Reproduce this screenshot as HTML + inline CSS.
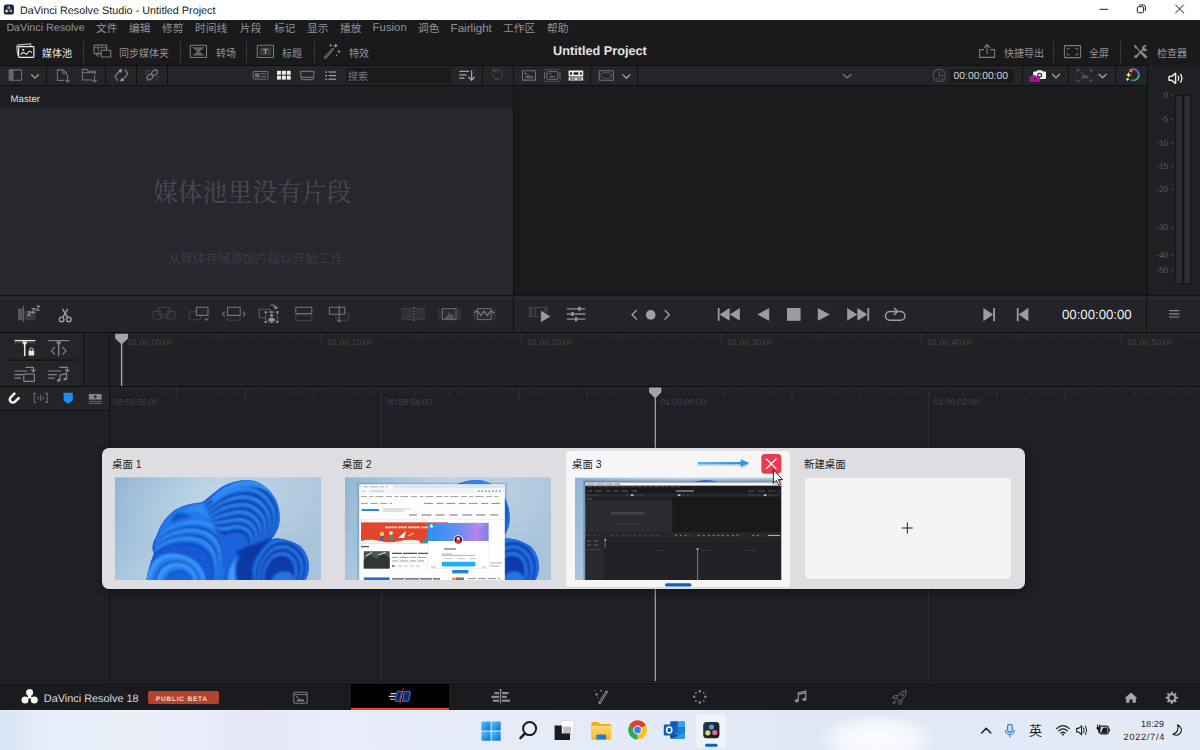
<!DOCTYPE html>
<html lang="zh-CN"><head><meta charset="utf-8"><title>DaVinci Resolve Studio - Untitled Project</title>
<style>
html,body{margin:0;padding:0;background:#28282e;}
body{width:1200px;height:750px;overflow:hidden;position:relative;font-family:"Liberation Sans",sans-serif;}
#root{position:absolute;left:0;top:0;width:1200px;height:750px;overflow:hidden;}
#root div,#root .t,#root svg{position:absolute;}
.t{white-space:nowrap;display:block;text-rendering:geometricPrecision;font-kerning:normal;}
svg.g{overflow:visible;}
svg.g text{font-family:"Liberation Sans","Noto Sans CJK SC",sans-serif;white-space:pre;}
svg.layer{left:0;top:0;pointer-events:none;}
</style></head>
<body><div id="root">
<div style="left:0px;top:0px;width:1200px;height:20px;background:#ffffff;"></div>
<span class="t" style="left:20px;top:5.9px;font-size:10.8px;line-height:10.8px;color:#1a1a1a;">DaVinci Resolve Studio - Untitled Project</span>
<div style="left:0px;top:20px;width:1200px;height:691px;background:#27282d;"></div>
<div style="left:0px;top:20px;width:1200px;height:17px;background:#1a1a1d;"></div>
<div style="left:0px;top:37px;width:1200px;height:28px;background:#1a1a1d;"></div>
<div style="left:0px;top:65px;width:1200px;height:1px;background:#0f0f11;"></div>
<div style="left:0px;top:66px;width:1200px;height:19px;background:#242529;"></div>
<div style="left:0px;top:85px;width:1200px;height:1px;background:#0f0f11;"></div>
<div style="left:0px;top:86px;width:513px;height:23.6px;background:#1e1f23;"></div>
<div style="left:0px;top:109px;width:513px;height:186px;background:#27282d;"></div>
<div style="left:513px;top:65px;width:1px;height:231px;background:#0f0f11;"></div>
<div style="left:514px;top:86px;width:634px;height:209px;background:#1b1b1c;"></div>
<div style="left:1147px;top:65px;width:1px;height:231px;background:#0f0f11;"></div>
<div style="left:1148px;top:65px;width:52px;height:230px;background:#1f2023;"></div>
<div style="left:0px;top:294.6px;width:1200px;height:1.8px;background:#121214;"></div>
<div style="left:0px;top:296.4px;width:1200px;height:3.6px;background:#26272c;"></div>
<div style="left:0px;top:300px;width:1200px;height:1px;background:#1d1d21;"></div>
<div style="left:0px;top:301px;width:1200px;height:31px;background:#232428;"></div>
<div style="left:0px;top:332px;width:1200px;height:1px;background:#0f0f11;"></div>
<div style="left:0px;top:333px;width:1200px;height:53px;background:#202125;"></div>
<div style="left:0px;top:386px;width:1200px;height:1px;background:#0f0f11;"></div>
<div style="left:0px;top:387px;width:1200px;height:298px;background:#1f2025;"></div>
<div style="left:0px;top:387px;width:109px;height:24px;background:#232428;"></div>
<div style="left:0px;top:410px;width:109px;height:1px;background:#0f0f11;"></div>
<div style="left:0px;top:411px;width:109px;height:273px;background:#1f2126;"></div>
<div style="left:109px;top:333px;width:1px;height:352px;background:#0f0f11;"></div>
<div style="left:513px;top:297px;width:1px;height:35px;background:#0f0f11;"></div>
<div style="left:1146px;top:297px;width:1px;height:35px;background:#0f0f11;"></div>
<div style="left:0px;top:333px;width:83px;height:53px;background:#242529;"></div>
<div style="left:83px;top:333px;width:1px;height:53px;background:#0f0f11;"></div>
<span class="t" style="left:6.4px;top:23.2px;font-size:10.7px;line-height:10.7px;color:#939398;">DaVinci Resolve</span>
<svg class="g" style="left:95.6px;top:31.9px" width="1" height="1"><text x="0" y="0" font-size="10.7" fill="#939398">文件</text></svg>
<svg class="g" style="left:128.6px;top:31.9px" width="1" height="1"><text x="0" y="0" font-size="10.7" fill="#939398">编辑</text></svg>
<svg class="g" style="left:162.0px;top:31.9px" width="1" height="1"><text x="0" y="0" font-size="10.7" fill="#939398">修剪</text></svg>
<svg class="g" style="left:195.2px;top:31.9px" width="1" height="1"><text x="0" y="0" font-size="10.7" fill="#939398">时间线</text></svg>
<svg class="g" style="left:240.0px;top:31.9px" width="1" height="1"><text x="0" y="0" font-size="10.7" fill="#939398">片段</text></svg>
<svg class="g" style="left:273.6px;top:31.9px" width="1" height="1"><text x="0" y="0" font-size="10.7" fill="#939398">标记</text></svg>
<svg class="g" style="left:306.6px;top:31.9px" width="1" height="1"><text x="0" y="0" font-size="10.7" fill="#939398">显示</text></svg>
<svg class="g" style="left:339.6px;top:31.9px" width="1" height="1"><text x="0" y="0" font-size="10.7" fill="#939398">播放</text></svg>
<svg class="g" style="left:417.6px;top:31.9px" width="1" height="1"><text x="0" y="0" font-size="10.7" fill="#939398">调色</text></svg>
<svg class="g" style="left:503.1px;top:31.9px" width="1" height="1"><text x="0" y="0" font-size="10.7" fill="#939398">工作区</text></svg>
<svg class="g" style="left:546.6px;top:31.9px" width="1" height="1"><text x="0" y="0" font-size="10.7" fill="#939398">帮助</text></svg>
<span class="t" style="left:372.6px;top:22.9px;font-size:11.4px;line-height:11.4px;color:#939398;">Fusion</span>
<span class="t" style="left:450.6px;top:22.8px;font-size:11.6px;line-height:11.6px;color:#939398;">Fairlight</span>
<svg class="g" style="left:42px;top:56.7px" width="1" height="1"><text x="0" y="0" font-size="10" fill="#e6e6e6">媒体池</text></svg>
<svg class="g" style="left:119px;top:56.7px" width="1" height="1"><text x="0" y="0" font-size="10" fill="#939398">同步媒体夹</text></svg>
<svg class="g" style="left:216px;top:56.7px" width="1" height="1"><text x="0" y="0" font-size="10" fill="#939398">转场</text></svg>
<svg class="g" style="left:282.4px;top:56.7px" width="1" height="1"><text x="0" y="0" font-size="10" fill="#939398">标题</text></svg>
<svg class="g" style="left:349px;top:56.7px" width="1" height="1"><text x="0" y="0" font-size="10" fill="#939398">特效</text></svg>
<svg class="g" style="left:1004px;top:56.7px" width="1" height="1"><text x="0" y="0" font-size="10" fill="#939398">快捷导出</text></svg>
<svg class="g" style="left:1089px;top:56.7px" width="1" height="1"><text x="0" y="0" font-size="10" fill="#939398">全屏</text></svg>
<svg class="g" style="left:1157px;top:56.7px" width="1" height="1"><text x="0" y="0" font-size="10" fill="#939398">检查器</text></svg>
<div style="left:83px;top:41px;width:1px;height:22px;background:#37373c;"></div>
<div style="left:180px;top:41px;width:1px;height:22px;background:#37373c;"></div>
<div style="left:246px;top:41px;width:1px;height:22px;background:#37373c;"></div>
<div style="left:314px;top:41px;width:1px;height:22px;background:#37373c;"></div>
<div style="left:1053px;top:41px;width:1px;height:22px;background:#37373c;"></div>
<div style="left:1120px;top:41px;width:1px;height:22px;background:#37373c;"></div>
<span class="t" style="left:553px;top:44.9px;font-size:12.7px;line-height:12.7px;color:#e4e4e4;font-weight:bold;">Untitled Project</span>
<div style="left:46px;top:65px;width:1px;height:21px;background:#0f0f11;"></div>
<div style="left:105px;top:65px;width:1px;height:21px;background:#0f0f11;"></div>
<div style="left:136px;top:65px;width:1px;height:21px;background:#0f0f11;"></div>
<div style="left:167px;top:65px;width:1px;height:21px;background:#0f0f11;"></div>
<div style="left:482px;top:65px;width:1px;height:21px;background:#0f0f11;"></div>
<div style="left:590px;top:65px;width:1px;height:21px;background:#0f0f11;"></div>
<div style="left:637px;top:65px;width:1px;height:21px;background:#0f0f11;"></div>
<div style="left:1021.5px;top:65px;width:1px;height:21px;background:#0f0f11;"></div>
<div style="left:1068px;top:65px;width:1px;height:21px;background:#0f0f11;"></div>
<div style="left:1114.5px;top:65px;width:1px;height:21px;background:#0f0f11;"></div>
<div style="left:346px;top:68px;width:105px;height:15.4px;background:#1b1b1e;border-radius:2px;"></div>
<div style="left:950.4px;top:69.4px;width:63.2px;height:13.6px;background:#1a1a1d;border-radius:1.5px;"></div>
<svg class="g" style="left:348px;top:80.2px" width="1" height="1"><text x="0" y="0" font-size="10" fill="#77777d">搜索</text></svg>
<span class="t" style="left:10.6px;top:95.3px;font-size:9.6px;line-height:9.6px;color:#e0e0e0;">Master</span>
<svg class="g" style="left:153px;top:201px" width="1" height="1"><text x="0" y="0" font-size="24.8" fill="#4a4a50" style="font-family:'Liberation Serif','Noto Serif CJK SC',serif;">媒体池里没有片段</text></svg>
<svg class="g" style="left:168px;top:263px" width="1" height="1"><text x="0" y="0" font-size="12.5" fill="#45454b" font-weight="300">从媒体存储添加片段以开始工作</text></svg>
<span class="t" style="left:953.6px;top:72.3px;font-size:10.3px;line-height:10.3px;color:#d8d8d8;">00:00:00:00</span>
<span class="t" style="left:1062px;top:308px;font-size:13.2px;line-height:13.2px;color:#f0f0f0;">00:00:00:00</span>
<svg class="layer" width="1200" height="750" viewBox="0 0 1200 750" style=""><defs><linearGradient id="appbg" x1="0" y1="0" x2="1" y2="1"><stop offset="0" stop-color="#1c2b3d"/><stop offset="1" stop-color="#15151c"/></linearGradient></defs><rect x="3.8" y="4.4" width="10.1" height="10" rx="2.2" fill="url(#appbg)"/><circle cx="8.9" cy="7.7" r="1.6" fill="#5a9ee0"/><circle cx="6.7" cy="11" r="1.6" fill="#d0da80"/><circle cx="10.9" cy="10.9" r="1.6" fill="#d9789c"/><g stroke="#1b1b1b" stroke-width="1" fill="none"><path d="M1099.5 9.3H1108"/><rect x="1137.3" y="6.7" width="6.3" height="6" rx="1.2"/><path d="M1139.2 5H1143.3Q1145.4 5 1145.4 7.1V10.8"/><path d="M1175.3 4.6L1183.9 13.2M1183.9 4.6L1175.3 13.2"/></g><g fill="none" stroke="#ececec" stroke-width="1.2" stroke-linejoin="round"><path d="M18.2 46.2L16.6 46.5L17.9 55.6" stroke-opacity=".75"/><path d="M17 45.2L30.5 43.9L30.8 46.3" stroke-opacity=".75"/><rect x="18.6" y="46.6" width="15.3" height="10.8" rx=".8"/><path d="M20.6 54.6Q23 51.2 25 53.4T28.6 51.6Q30.4 50.6 32 53" stroke-width="1.1"/></g><rect x="22.3" y="48.9" width="1.9" height="1.8" fill="#ececec"/><g fill="none" stroke="#7b7b81" stroke-width="1.1"><rect x="94" y="45" width="12.6" height="8.6" rx=".6"/><path d="M94 47.6H106.6M98.3 45V53.6M102.4 45V47.6" stroke-opacity=".7"/><rect x="101.2" y="50.2" width="9.6" height="6.8" rx=".6" fill="#1b1b1e"/><path d="M96.8 53.6V56M96.8 56H99" stroke-opacity=".8"/></g><rect x="190.3" y="45.3" width="16.2" height="12.2" rx=".6" fill="none" stroke="#7b7b81" stroke-width="1.1"/><path d="M192.3 47.2H204.5L199.6 51.4L204.5 55.6H192.3L197.2 51.4Z" fill="#7b7b81" fill-opacity=".75"/><rect x="257.3" y="45.3" width="16.2" height="12.2" rx=".6" fill="none" stroke="#7b7b81" stroke-width="1.1"/><rect x="259.4" y="47.4" width="12" height="8" fill="#7b7b81" fill-opacity=".35"/><path d="M262.8 49.2H268M265.4 49.2V54" stroke="#a2a2a8" stroke-width="1.1" fill="none"/><g stroke="#7b7b81" fill="none" stroke-linecap="round"><path d="M325.2 57.6L332.8 49.2" stroke-width="2.4"/><path d="M325.2 57.6L332.8 49.2" stroke="#1b1b1e" stroke-width=".8"/></g><g fill="#a2a2a8"><path d="M335.8 43.2l.7 1.7 1.7.7-1.7.7-.7 1.7-.7-1.7-1.7-.7 1.7-.7z"/><path d="M339 49.6l.6 1.3 1.3.6-1.3.6-.6 1.3-.6-1.3-1.3-.6 1.3-.6z"/><path d="M330.6 43.8l.5 1 1 .5-1 .5-.5 1-.5-1-1-.5 1-.5z"/><circle cx="336.6" cy="55.2" r=".7"/><circle cx="333.2" cy="46.4" r=".5"/></g><g fill="none" stroke="#7b7b81" stroke-width="1.1" stroke-linejoin="round"><path d="M984 49.6H979.6V57.4H994.6V49.6H990.2"/><path d="M987.1 54V45M983.9 47.9L987.1 44.7L990.3 47.9"/></g><rect x="1064.4" y="45.6" width="16.2" height="12" rx=".6" fill="none" stroke="#7b7b81" stroke-width="1.1"/><path d="M1067.2 50.6V48.4H1070M1075 48.4H1077.8V50.6M1077.8 52.6V54.8H1075M1070 54.8H1067.2V52.6" fill="none" stroke="#7b7b81" stroke-width="1" stroke-opacity=".85"/><g stroke="#8b8b91" fill="none" stroke-linecap="round"><path d="M1135.2 46.4L1141.4 52.6" stroke-width="1.2"/><path d="M1142 53.2L1145.8 57" stroke-width="2.6"/><path d="M1136 56.6L1143.2 49.4" stroke-width="1.5"/></g><path d="M1146.8 45.6a3 3 0 1 0 1 4l-2.4 -.4 -1 -1.8z" fill="#8b8b91"/><path d="M1133.8 45l2.4 .6 .6 1.6 -1.4 1.2z" fill="#8b8b91"/><circle cx="1135.8" cy="56.6" r="1.5" fill="#8b8b91"/><rect x="9.2" y="69.9" width="12.4" height="10.4" rx=".5" fill="none" stroke="#707076" stroke-width="1.1"/><rect x="9.2" y="69.9" width="4.4" height="10.4" fill="#707076" fill-opacity=".85"/><path d="M31.6 74.7L35 78.10000000000001L38.4 74.7" fill="none" stroke="#a2a2a8" stroke-width="1.3" stroke-linecap="round" stroke-linejoin="round"/><g fill="none" stroke="#707076" stroke-width="1.1" stroke-linejoin="round"><path d="M66.4 75V73L63 69.9H57.4V80.4H64"/><path d="M62.8 70V73.2H66.3"/><path d="M67.6 74.6V82M65.4 79.8L67.6 82L69.8 79.8"/><path d="M92 80H82.4V69.4H86.6L88 71.2H95.4V74.4"/><path d="M82.4 72.6H95"/><path d="M94.6 75.4V82M92.4 79.8L94.6 82L96.8 79.8"/></g><g fill="none" stroke="#707076" stroke-width="1.5" stroke-linecap="round" stroke-linejoin="round"><path d="M120 71L116.6 74.4Q114.6 76.4 116 78.4L117.4 80.2"/><path d="M122.4 79.8L126.2 76Q128.2 74 126.8 72L125.2 70"/></g><path d="M118.2 70.2L122.2 69L121 73Z" fill="#a2a2a8"/><path d="M124.2 80.6L120.2 81.8L121.4 77.8Z" fill="#a2a2a8"/><g fill="none" stroke="#707076" stroke-width="1.3"><ellipse rx="3.3" ry="2.3" transform="translate(150 77) rotate(-42)" stroke-width="1.4"/><ellipse rx="3.3" ry="2.3" transform="translate(154.6 72.8) rotate(-42)" stroke-width="1.4"/><path d="M146.4 70.8L147.4 72M148.8 69.8L149.2 71M145.4 73.2L146.6 73.6M158 79.6L157 78.4M155.6 80.6L155.2 79.4M159 77.2L157.8 76.8" stroke-width=".8" stroke-opacity=".75" stroke-linecap="round"/></g><rect x="253.2" y="71.5" width="14.6" height="7.6" rx=".5" fill="none" stroke="#707076" stroke-width="1"/><rect x="255" y="73.3" width="4.6" height="4" fill="#707076"/><path d="M261 73.8H266M261 76.6H266" stroke="#707076" stroke-width="1"/><rect x="277.0" y="70.8" width="3.9" height="3.9" fill="#f2f2f2"/><rect x="281.9" y="70.8" width="3.9" height="3.9" fill="#f2f2f2"/><rect x="286.8" y="70.8" width="3.9" height="3.9" fill="#f2f2f2"/><rect x="277.0" y="75.7" width="3.9" height="3.9" fill="#f2f2f2"/><rect x="281.9" y="75.7" width="3.9" height="3.9" fill="#f2f2f2"/><rect x="286.8" y="75.7" width="3.9" height="3.9" fill="#f2f2f2"/><rect x="300.8" y="71.4" width="13" height="6" rx=".5" fill="none" stroke="#707076" stroke-width="1.1"/><path d="M302 79.6H312.6" stroke="#707076" stroke-width="1.2"/><path d="M301.4 77.4v2.8M313.2 77.4v2.8" stroke="#707076" stroke-width=".8"/><rect x="325.4" y="71.3" width="1.6" height="1.5" fill="#a2a2a8"/><path d="M328.6 72.0H336" stroke="#a2a2a8" stroke-width="1.2"/><rect x="325.4" y="74.9" width="1.6" height="1.5" fill="#a2a2a8"/><path d="M328.6 75.6H336" stroke="#a2a2a8" stroke-width="1.2"/><rect x="325.4" y="78.5" width="1.6" height="1.5" fill="#a2a2a8"/><path d="M328.6 79.2H336" stroke="#a2a2a8" stroke-width="1.2"/><g fill="none" stroke="#a2a2a8" stroke-width="1.3" stroke-linecap="round" stroke-linejoin="round"><path d="M459.8 71.4H468.6M459.8 74.8H466.2M459.8 78.2H464"/><path d="M471.6 70.6V80M468.8 77.3L471.6 80.2L474.4 77.3"/></g><g fill="none" stroke="#46464c" stroke-width="1.2" stroke-linecap="round" stroke-linejoin="round"><path d="M494 71.2A4.8 4.8 0 1 1 492.8 74.8"/><path d="M493.4 68.4V71.6H496.6"/></g><rect x="522.5" y="70.7" width="13" height="9.4" rx=".5" fill="none" stroke="#707076" stroke-width="1.1"/><path d="M524.4 78.2L528 74.2L530.2 76.6L531.6 75.4L534 78.2Z" fill="#707076" fill-opacity=".8"/><path d="M525.4 72.2l.45 .95 .95 .45 -.95 .45 -.45 .95 -.45 -.95 -.95 -.45 .95 -.45z" fill="#a2a2a8"/><rect x="547" y="71.6" width="10.8" height="7.8" rx=".5" fill="none" stroke="#707076" stroke-width="1"/><path d="M544.6 72V79M560 72V79" stroke="#707076" stroke-width="1"/><path d="M544.4 69.6H560.4M544.4 81.2H560.4" stroke="#707076" stroke-width="1" stroke-dasharray="1.2 1.1"/><path d="M549 77.6L551.4 75L553 76.6L554 75.8L556 77.6Z" fill="#707076" fill-opacity=".8"/><rect x="549.4" y="73" width="1.2" height="1.2" fill="#a2a2a8"/><g fill="#f4f4f4"><path d="M568.6 70.6H583.2V76.4H568.6Z M570 72.2V74.8H572V72.2Z M573.6 72.2V74.8H578.4V72.2Z M580 72.2V74.8H581.8V72.2Z" fill-rule="evenodd"/><path d="M568.6 77.4H583.2V80.6H568.6Z M570 78.5V79.5H575.2V78.5Z M576.8 78.5V79.5H581.8V78.5Z" fill-rule="evenodd"/></g><rect x="599.2" y="70.7" width="14.2" height="9.6" rx=".5" fill="none" stroke="#707076" stroke-width="1.1"/><path d="M603.4 72.8H609.2L611.4 74.4V76.6L609.2 78.2H603.4L601.2 76.6V74.4Z" fill="none" stroke="#707076" stroke-width=".9" stroke-opacity=".8"/><path d="M622.8 74.60000000000001L626.4 78.2L630.0 74.60000000000001" fill="none" stroke="#a2a2a8" stroke-width="1.3" stroke-linecap="round" stroke-linejoin="round"/><path d="M843.4000000000001 74.5L847.2 77.9L851.0 74.5" fill="none" stroke="#77777d" stroke-width="1.3" stroke-linecap="round" stroke-linejoin="round"/><g fill="none" stroke="#4f4f55" stroke-width="1.2"><circle cx="939.2" cy="75.4" r="6.2"/><path d="M939.2 71V75.6H943.2" stroke-linecap="round"/><path d="M936.4 77.6V79.6M939.2 77.6V79.6M942 77.6V79.6" stroke-width=".9"/></g><path d="M1034.2 71.6H1036.4L1037.4 70.2H1041.8L1042.8 71.6H1045Q1046 71.6 1046 72.6V78Q1046 79 1045 79H1034.2Q1033.2 79 1033.2 78V72.6Q1033.2 71.6 1034.2 71.6Z" fill="#f4f4f4"/><circle cx="1039.6" cy="75.2" r="2.5" fill="#27272c"/><circle cx="1039.6" cy="75.2" r="1.3" fill="#f4f4f4"/><rect x="1029.6" y="76.2" width="10.4" height="5.6" fill="#a3159d"/><rect x="1032.6" y="75.2" width="3.2" height="1.4" fill="#a3159d"/><circle cx="1034.8" cy="79" r="1.2" fill="#6f0f6c"/><path d="M1052.4 74.2L1056 77.8L1059.6 74.2" fill="none" stroke="#a2a2a8" stroke-width="1.3" stroke-linecap="round" stroke-linejoin="round"/><g fill="none" stroke="#4c4c52" stroke-width="1.3" stroke-linecap="round"><path d="M1077.4 71.4L1079.6 69.4M1077.4 69.4V71.6M1091.8 71.4L1089.6 69.4M1091.8 69.4V71.6M1077.4 79.6L1079.6 81.6M1077.4 81.6V79.4M1091.8 79.6L1089.6 81.6M1091.8 81.6V79.4"/></g><path d="M1080.6 78.6L1083.6 73.4L1085.6 76L1087 74.8L1089.2 78.6Z" fill="#4c4c52"/><circle cx="1081.8" cy="72.8" r="1" fill="#4c4c52"/><path d="M1099.0 74.2L1102.6 77.8L1106.1999999999998 74.2" fill="none" stroke="#a2a2a8" stroke-width="1.3" stroke-linecap="round" stroke-linejoin="round"/><defs><linearGradient id="ring" x1="0" y1="0" x2="1" y2="1"><stop offset="0" stop-color="#ff4b3a"/><stop offset=".35" stop-color="#e040c8"/><stop offset=".6" stop-color="#4a6cf5"/><stop offset=".85" stop-color="#2ec46a"/><stop offset="1" stop-color="#e6d43a"/></linearGradient></defs><path d="M1129.6 70.6A5.6 5.6 0 1 1 1131.6 80.2" fill="none" stroke="url(#ring)" stroke-width="1.7" stroke-linecap="round"/><path d="M1128.6 72l.9 2 2 .9-2 .9-.9 2-.9-2-2-.9 2-.9z" fill="#f5e66a"/><path d="M1127.6 77.4l.6 1.3 1.3 .6-1.3 .6-.6 1.3-.6-1.3-1.3-.6 1.3-.6z" fill="#f7f1b0"/><path d="M1131.4 70l.4 .9 .9 .4-.9 .4-.4 .9-.4-.9-.9-.4 .9-.4z" fill="#fff"/><path d="M1169 76.4H1171.6L1175.6 73.2V83.4L1171.6 80.2H1169Z" fill="none" stroke="#f2f2f2" stroke-width="1.4" stroke-linejoin="round"/><path d="M1178.2 76.2Q1179.6 78.3 1178.2 80.4M1180.6 74.4Q1183.2 78.3 1180.6 82.2" fill="none" stroke="#f2f2f2" stroke-width="1.3" stroke-linecap="round"/></svg>
<svg class="layer" width="1200" height="750" viewBox="0 0 1200 750" style=""><rect x="18" y="308.6" width="4.6" height="11.6" fill="#55555b"/><path d="M23.4 305.8V322" stroke="#6a6a70" stroke-width="1"/><rect x="24.4" y="311" width="11.4" height="9.2" fill="#3a3a40"/><g fill="none" stroke="#8e8e94" stroke-width="1.1" stroke-linejoin="round"><path d="M27.8 311.8H30.6L27.8 315.4H30.6"/><path d="M31.8 308.6H35L31.8 312.6H35"/><path d="M36.2 306H39.8L36.2 310.2H39.8"/></g><g fill="none" stroke="#9d9da3" stroke-width="1.4" stroke-linecap="round"><circle cx="61.6" cy="319.4" r="2.3"/><circle cx="68.8" cy="319.4" r="2.3"/><path d="M62.8 317.4L67.6 309.4M67.6 317.4L62.8 309.4"/></g><g fill="none" stroke="#404046" stroke-width="1.1"><rect x="158.4" y="307.2" width="11" height="7.4" rx=".5"/><rect x="153.2" y="311.4" width="8" height="7.6" rx=".5"/><rect x="166.8" y="311.4" width="8" height="7.6" rx=".5"/><path d="M160 317H168.6"/></g><rect x="189.2" y="311.8" width="11.4" height="8" rx=".5" fill="none" stroke="#404046" stroke-width="1.1"/><rect x="196.4" y="307.2" width="11.6" height="8.2" rx=".5" fill="#26262b" stroke="#74747a" stroke-width="1.1"/><path d="M204.8 318.4L206.6 320.2L208.4 318.4" fill="none" stroke="#74747a" stroke-width="1.1"/><rect x="227.4" y="307.2" width="12.8" height="8.2" rx=".5" fill="none" stroke="#74747a" stroke-width="1.1"/><path d="M227.4 316.6V320.2H240.2V316.6" fill="none" stroke="#404046" stroke-width="1.1"/><path d="M224.8 311.6L222.6 314L224.8 316.4M242.8 311.6L245 314L242.8 316.4" fill="none" stroke="#74747a" stroke-width="1.1"/><rect x="259.2" y="309.2" width="11" height="8.6" rx=".5" fill="none" stroke="#5e5e64" stroke-width="1.1"/><rect x="265.6" y="312.2" width="12" height="9.8" fill="#26262b" stroke="#74747a" stroke-width="1" stroke-dasharray="2 1.2"/><rect x="264.6" y="311.2" width="2" height="2" fill="#8a8a90"/><rect x="276.6" y="311.2" width="2" height="2" fill="#8a8a90"/><rect x="264.6" y="321" width="2" height="2" fill="#8a8a90"/><rect x="276.6" y="321" width="2" height="2" fill="#8a8a90"/><rect x="270.6" y="311.2" width="2" height="2" fill="#8a8a90"/><rect x="270.6" y="321" width="2" height="2" fill="#8a8a90"/><circle cx="271.6" cy="315.6" r="1.5" fill="#94949a"/><path d="M268.4 321V319.6Q268.4 317.8 271.6 317.8T274.8 319.6V321Z" fill="#94949a"/><path d="M270.6 305.2Q275.4 304.2 276 308.2M274 306.8L276 309L277.8 306.6" fill="none" stroke="#8a8a90" stroke-width="1.1"/><rect x="295.8" y="307.2" width="16" height="6.4" rx=".5" fill="none" stroke="#74747a" stroke-width="1.1"/><rect x="295.8" y="315" width="16" height="5.6" rx=".5" fill="none" stroke="#404046" stroke-width="1.1"/><rect x="336" y="313" width="12.4" height="7.2" rx=".5" fill="none" stroke="#404046" stroke-width="1.1"/><rect x="329.4" y="307.2" width="15.4" height="7" rx=".5" fill="#26262b" stroke="#74747a" stroke-width="1.1"/><path d="M339.2 306V321.4M337.6 321.4H340.8" stroke="#74747a" stroke-width="1.1"/><rect x="401" y="308.4" width="11.4" height="11.2" fill="#313137"/><rect x="415.4" y="308.4" width="9.8" height="11.2" fill="#313137"/><path d="M401 308.4H425M401 319.6H425" stroke="#44444a" stroke-width=".8"/><path d="M413.9 307V321" stroke="#7e7e84" stroke-width="1.2" stroke-dasharray="1.6 1.6"/><rect x="438" y="308.8" width="4" height="10.6" fill="#303036"/><rect x="456.6" y="308.8" width="4.4" height="10.6" fill="#303036"/><rect x="442.4" y="308.6" width="13.6" height="11" fill="#2c2c32" stroke="#66666c" stroke-width="1.1"/><path d="M443.6 319L447.4 315.6L449 312L450.4 315L452 313.4L454.8 319Z" fill="#55555b"/><rect x="473" y="308.8" width="4" height="10.6" fill="#303036"/><rect x="491.6" y="308.8" width="4.4" height="10.6" fill="#303036"/><rect x="477.4" y="308.6" width="13.6" height="11" fill="#2c2c32" stroke="#66666c" stroke-width="1.1"/><path d="M474 312.6L477.6 311L480.8 315.6L484 311.2L487.4 315.6L490.6 311L494.6 313" fill="none" stroke="#808086" stroke-width="1.1"/><g fill="none" stroke="#48484e" stroke-width="1"><rect x="529.6" y="307.6" width="17.4" height="9"/><path d="M531.8 307.6V316.6M544.8 307.6V316.6M535.6 307.6V316.6"/></g><path d="M529.6 309.6H531.8M529.6 311.8H531.8M529.6 314H531.8M544.8 309.6H547M544.8 311.8H547" stroke="#48484e" stroke-width=".8"/><path d="M540.6 310L551 316.4L540.6 322.8Z" fill="#9a9aa0" stroke="#26262b" stroke-width=".8"/><g stroke="#9d9da3" stroke-width="1.3" stroke-linecap="round"><path d="M567.2 308.8H585M567.2 314H585M567.2 319.2H585" stroke-opacity=".85"/></g><rect x="578.4" y="306.8" width="2.2" height="4" fill="#9d9da3"/><rect x="571.4" y="312" width="2.2" height="4" fill="#9d9da3"/><rect x="575" y="317.2" width="2.2" height="4" fill="#9d9da3"/><path d="M636.4 310.6L632 314.8L636.4 319M665 310.6L669.4 314.8L665 319" fill="none" stroke="#a0a0a6" stroke-width="1.4" stroke-linecap="round" stroke-linejoin="round"/><circle cx="650.7" cy="314.9" r="4.8" fill="#a0a0a6"/><g fill="#9b9ba1"><rect x="717.8" y="308" width="1.8" height="12.8"/><path d="M729.6 308V320.8L719.6 314.4Z"/><path d="M739.8 308V320.8L729.8 314.4Z"/><path d="M769.2 308V320.8L757.4 314.4Z"/><rect x="787" y="308" width="13.6" height="12.8"/><path d="M817.8 308V320.8L829.8 314.4Z"/><path d="M847.2 308V320.8L857.2 314.4Z"/><path d="M857.4 308V320.8L867.4 314.4Z"/><rect x="867.4" y="308" width="1.8" height="12.8"/><rect x="993.2" y="308" width="1.8" height="13.2"/><path d="M983.4 308V321.2L993.2 314.6Z"/><rect x="1016.8" y="308" width="1.8" height="13.2"/><path d="M1028.4 308V321.2L1018.6 314.6Z"/></g><path d="M893.4 311.6H889.8A4.3 4.3 0 0 0 889.8 320.2H900.6A4.3 4.3 0 0 0 900.6 311.6H899" fill="none" stroke="#9b9ba1" stroke-width="1.5" stroke-linecap="round"/><path d="M892.6 311.6H897M894.6 308.2L897.6 311.4L894.4 314.4" fill="none" stroke="#9b9ba1" stroke-width="1.5" stroke-linecap="round" stroke-linejoin="round"/><path d="M1169 310.6H1179.4M1169 313.8H1179.4M1169 317H1179.4" stroke="#85858b" stroke-width="1.2"/><path d="M14.6 340.6H35.4" stroke="#e8e8e8" stroke-width="1.3"/><path d="M15 342.6H35" stroke="#77777d" stroke-width="1.2" stroke-dasharray="1 1.6"/><path d="M22 341.4H27.4L26 344.4H23.4Z" fill="#e8e8e8"/><path d="M24.7 343V356" stroke="#e8e8e8" stroke-width="1.5"/><rect x="28.6" y="350.8" width="5.6" height="4.8" rx=".6" fill="#e8e8e8"/><path d="M29.8 351V349.6A1.6 1.6 0 0 1 33 349.6V351" fill="none" stroke="#e8e8e8" stroke-width="1"/><path d="M48.4 340.6H69.2" stroke="#85858b" stroke-width="1.2"/><path d="M56 341.4H61.4L60 344.2H57.4Z" fill="#85858b"/><path d="M58.7 343V356" stroke="#85858b" stroke-width="1.3"/><path d="M54.6 347.4L51.4 350.8L54.6 354.2M62.8 347.4L66 350.8L62.8 354.2" fill="none" stroke="#85858b" stroke-width="1.2" stroke-linecap="round" stroke-linejoin="round"/><path d="M8 360.2H76.6" stroke="#121215" stroke-width="1.2"/><g fill="none" stroke="#85858b" stroke-width="1.2" stroke-linecap="round"><path d="M14.8 371H27M14.8 374.6H22.6M14.8 378.2H20.4"/><path d="M26 367.4H33.4V371.4M31.6 369.8L33.4 371.8L35.2 369.8"/><rect x="23.8" y="374" width="10.6" height="7.4" rx=".5"/><path d="M48.6 371H60.8M48.6 374.6H56.4M48.6 378.2H54.2"/><path d="M59.8 367.4H67.2V371.4M65.4 369.8L67.2 371.8L69 369.8"/><path d="M60 380.4V375L66.6 373.6V379"/></g><ellipse cx="58.6" cy="380.4" rx="1.7" ry="1.4" fill="#85858b"/><ellipse cx="65.2" cy="379.2" rx="1.7" ry="1.4" fill="#85858b"/><g transform="translate(13.6 398.8) rotate(45)"><path d="M-3.1 -5.2V1A3.1 3.1 0 0 0 3.1 1V-5.2" fill="none" stroke="#f4f4f4" stroke-width="2.5"/></g><g fill="none" stroke="#6c6c72" stroke-width="1.1"><path d="M36.2 393.4H34.2V402.4H36.2M45.2 393.4H47.2V402.4H45.2"/><path d="M38.2 396.4V399.6M40.7 395V401M43.2 396.4V399.6"/></g><path d="M63.6 393.6Q63.6 392.8 64.4 392.8H72Q72.8 392.8 72.8 393.6V400.6L68.2 403.8L63.6 400.6Z" fill="#1d8df2"/><rect x="88.8" y="394" width="12.8" height="5.6" fill="#85858b"/><path d="M95.2 395V398.6M93.4 396.8H97" stroke="#26262b" stroke-width="1"/><path d="M88.8 401.4H101.6M88.8 403.4H101.6" stroke="#85858b" stroke-width="1" stroke-opacity=".7"/><path d="M125.5 333V336.5M129.5 333V337.5M133.5 333V336.5M137.5 333V337.5M141.5 333V338M145.5 333V336.5M149.5 333V337.5M153.5 333V336.5M157.5 333V337.5M161.5 333V338M165.5 333V336.5M169.5 333V337.5M173.5 333V336.5M177.5 333V337.5M181.5 333V338M185.5 333V336.5M189.5 333V337.5M193.5 333V336.5M197.5 333V337.5M201.5 333V338M205.5 333V336.5M209.5 333V337.5M213.5 333V336.5M217.5 333V337.5M225.5 333V336.5M229.5 333V337.5M233.5 333V336.5M237.5 333V337.5M241.5 333V338M245.5 333V336.5M249.5 333V337.5M253.5 333V336.5M257.5 333V337.5M261.5 333V338M265.5 333V336.5M269.5 333V337.5M273.5 333V336.5M277.5 333V337.5M281.5 333V338M285.5 333V336.5M289.5 333V337.5M293.5 333V336.5M297.5 333V337.5M301.5 333V338M305.5 333V336.5M309.5 333V337.5M313.5 333V336.5M317.5 333V337.5M325.5 333V336.5M329.5 333V337.5M333.5 333V336.5M337.5 333V337.5M341.5 333V338M345.5 333V336.5M349.5 333V337.5M353.5 333V336.5M357.5 333V337.5M361.5 333V338M365.5 333V336.5M369.5 333V337.5M373.5 333V336.5M377.5 333V337.5M381.5 333V338M385.5 333V336.5M389.5 333V337.5M393.5 333V336.5M397.5 333V337.5M401.5 333V338M405.5 333V336.5M409.5 333V337.5M413.5 333V336.5M417.5 333V337.5M425.5 333V336.5M429.5 333V337.5M433.5 333V336.5M437.5 333V337.5M441.5 333V338M445.5 333V336.5M449.5 333V337.5M453.5 333V336.5M457.5 333V337.5M461.5 333V338M465.5 333V336.5M469.5 333V337.5M473.5 333V336.5M477.5 333V337.5M481.5 333V338M485.5 333V336.5M489.5 333V337.5M493.5 333V336.5M497.5 333V337.5M501.5 333V338M505.5 333V336.5M509.5 333V337.5M513.5 333V336.5M517.5 333V337.5M525.5 333V336.5M529.5 333V337.5M533.5 333V336.5M537.5 333V337.5M541.5 333V338M545.5 333V336.5M549.5 333V337.5M553.5 333V336.5M557.5 333V337.5M561.5 333V338M565.5 333V336.5M569.5 333V337.5M573.5 333V336.5M577.5 333V337.5M581.5 333V338M585.5 333V336.5M589.5 333V337.5M593.5 333V336.5M597.5 333V337.5M601.5 333V338M605.5 333V336.5M609.5 333V337.5M613.5 333V336.5M617.5 333V337.5M625.5 333V336.5M629.5 333V337.5M633.5 333V336.5M637.5 333V337.5M641.5 333V338M645.5 333V336.5M649.5 333V337.5M653.5 333V336.5M657.5 333V337.5M661.5 333V338M665.5 333V336.5M669.5 333V337.5M673.5 333V336.5M677.5 333V337.5M681.5 333V338M685.5 333V336.5M689.5 333V337.5M693.5 333V336.5M697.5 333V337.5M701.5 333V338M705.5 333V336.5M709.5 333V337.5M713.5 333V336.5M717.5 333V337.5M725.5 333V336.5M729.5 333V337.5M733.5 333V336.5M737.5 333V337.5M741.5 333V338M745.5 333V336.5M749.5 333V337.5M753.5 333V336.5M757.5 333V337.5M761.5 333V338M765.5 333V336.5M769.5 333V337.5M773.5 333V336.5M777.5 333V337.5M781.5 333V338M785.5 333V336.5M789.5 333V337.5M793.5 333V336.5M797.5 333V337.5M801.5 333V338M805.5 333V336.5M809.5 333V337.5M813.5 333V336.5M817.5 333V337.5M825.5 333V336.5M829.5 333V337.5M833.5 333V336.5M837.5 333V337.5M841.5 333V338M845.5 333V336.5M849.5 333V337.5M853.5 333V336.5M857.5 333V337.5M861.5 333V338M865.5 333V336.5M869.5 333V337.5M873.5 333V336.5M877.5 333V337.5M881.5 333V338M885.5 333V336.5M889.5 333V337.5M893.5 333V336.5M897.5 333V337.5M901.5 333V338M905.5 333V336.5M909.5 333V337.5M913.5 333V336.5M917.5 333V337.5M925.5 333V336.5M929.5 333V337.5M933.5 333V336.5M937.5 333V337.5M941.5 333V338M945.5 333V336.5M949.5 333V337.5M953.5 333V336.5M957.5 333V337.5M961.5 333V338M965.5 333V336.5M969.5 333V337.5M973.5 333V336.5M977.5 333V337.5M981.5 333V338M985.5 333V336.5M989.5 333V337.5M993.5 333V336.5M997.5 333V337.5M1001.5 333V338M1005.5 333V336.5M1009.5 333V337.5M1013.5 333V336.5M1017.5 333V337.5M1025.5 333V336.5M1029.5 333V337.5M1033.5 333V336.5M1037.5 333V337.5M1041.5 333V338M1045.5 333V336.5M1049.5 333V337.5M1053.5 333V336.5M1057.5 333V337.5M1061.5 333V338M1065.5 333V336.5M1069.5 333V337.5M1073.5 333V336.5M1077.5 333V337.5M1081.5 333V338M1085.5 333V336.5M1089.5 333V337.5M1093.5 333V336.5M1097.5 333V337.5M1101.5 333V338M1105.5 333V336.5M1109.5 333V337.5M1113.5 333V336.5M1117.5 333V337.5M1125.5 333V336.5M1129.5 333V337.5M1133.5 333V336.5M1137.5 333V337.5M1141.5 333V338M1145.5 333V336.5M1149.5 333V337.5M1153.5 333V336.5M1157.5 333V337.5M1161.5 333V338M1165.5 333V336.5M1169.5 333V337.5M1173.5 333V336.5M1177.5 333V337.5M1181.5 333V338M1185.5 333V336.5M1189.5 333V337.5M1193.5 333V336.5M1197.5 333V337.5" stroke="#2c2c32" stroke-width="1"/><path d="M121.5 333V346M221.5 333V340M321.5 333V346M421.5 333V340M521.5 333V346M621.5 333V340M721.5 333V346M821.5 333V340M921.5 333V346M1021.5 333V340M1121.5 333V346" stroke="#34343a" stroke-width="1"/><path d="M114.0 387V392.5M116.8 387V390.5M119.7 387V394M122.5 387V390.5M125.4 387V392.5M128.2 387V390.5M131.1 387V394M133.9 387V390.5M136.8 387V392.5M139.6 387V390.5M142.5 387V395.5M145.3 387V390.5M148.2 387V392.5M151.0 387V390.5M153.9 387V394M156.7 387V390.5M159.6 387V392.5M162.4 387V390.5M165.3 387V394M168.1 387V390.5M171.0 387V392.5M173.8 387V390.5M179.5 387V390.5M182.4 387V392.5M185.2 387V390.5M188.1 387V394M190.9 387V390.5M193.8 387V392.5M196.6 387V390.5M199.5 387V394M202.3 387V390.5M205.2 387V392.5M208.0 387V390.5M210.9 387V395.5M213.7 387V390.5M216.6 387V392.5M219.4 387V390.5M222.3 387V394M225.1 387V390.5M228.0 387V392.5M230.8 387V390.5M233.7 387V394M236.5 387V390.5M239.4 387V392.5M242.2 387V390.5M247.9 387V390.5M250.7 387V392.5M253.6 387V390.5M256.4 387V394M259.3 387V390.5M262.1 387V392.5M265.0 387V390.5M267.8 387V394M270.7 387V390.5M273.5 387V392.5M276.4 387V390.5M279.2 387V395.5M282.1 387V390.5M284.9 387V392.5M287.8 387V390.5M290.6 387V394M293.5 387V390.5M296.3 387V392.5M299.2 387V390.5M302.0 387V394M304.9 387V390.5M307.7 387V392.5M310.6 387V390.5M316.3 387V390.5M319.1 387V392.5M322.0 387V390.5M324.8 387V394M327.7 387V390.5M330.5 387V392.5M333.4 387V390.5M336.2 387V394M339.1 387V390.5M341.9 387V392.5M344.8 387V390.5M347.6 387V395.5M350.5 387V390.5M353.3 387V392.5M356.2 387V390.5M359.0 387V394M361.9 387V390.5M364.7 387V392.5M367.6 387V390.5M370.4 387V394M373.3 387V390.5M376.1 387V392.5M379.0 387V390.5M384.6 387V390.5M387.5 387V392.5M390.3 387V390.5M393.2 387V394M396.0 387V390.5M398.9 387V392.5M401.7 387V390.5M404.6 387V394M407.4 387V390.5M410.3 387V392.5M413.1 387V390.5M416.0 387V395.5M418.8 387V390.5M421.7 387V392.5M424.5 387V390.5M427.4 387V394M430.2 387V390.5M433.1 387V392.5M435.9 387V390.5M438.8 387V394M441.6 387V390.5M444.5 387V392.5M447.3 387V390.5M453.0 387V390.5M455.9 387V392.5M458.7 387V390.5M461.6 387V394M464.4 387V390.5M467.3 387V392.5M470.1 387V390.5M473.0 387V394M475.8 387V390.5M478.7 387V392.5M481.5 387V390.5M484.4 387V395.5M487.2 387V390.5M490.1 387V392.5M492.9 387V390.5M495.8 387V394M498.6 387V390.5M501.5 387V392.5M504.3 387V390.5M507.2 387V394M510.0 387V390.5M512.9 387V392.5M515.7 387V390.5M521.4 387V390.5M524.2 387V392.5M527.1 387V390.5M529.9 387V394M532.8 387V390.5M535.6 387V392.5M538.5 387V390.5M541.3 387V394M544.2 387V390.5M547.0 387V392.5M549.9 387V390.5M552.7 387V395.5M555.6 387V390.5M558.4 387V392.5M561.3 387V390.5M564.1 387V394M567.0 387V390.5M569.8 387V392.5M572.7 387V390.5M575.5 387V394M578.4 387V390.5M581.2 387V392.5M584.1 387V390.5M589.8 387V390.5M592.6 387V392.5M595.5 387V390.5M598.3 387V394M601.2 387V390.5M604.0 387V392.5M606.9 387V390.5M609.7 387V394M612.6 387V390.5M615.4 387V392.5M618.3 387V390.5M621.1 387V395.5M624.0 387V390.5M626.8 387V392.5M629.7 387V390.5M632.5 387V394M635.4 387V390.5M638.2 387V392.5M641.1 387V390.5M643.9 387V394M646.8 387V390.5M649.6 387V392.5M652.5 387V390.5M658.1 387V390.5M661.0 387V392.5M663.8 387V390.5M666.7 387V394M669.5 387V390.5M672.4 387V392.5M675.2 387V390.5M678.1 387V394M680.9 387V390.5M683.8 387V392.5M686.6 387V390.5M689.5 387V395.5M692.3 387V390.5M695.2 387V392.5M698.0 387V390.5M700.9 387V394M703.7 387V390.5M706.6 387V392.5M709.4 387V390.5M712.3 387V394M715.1 387V390.5M718.0 387V392.5M720.8 387V390.5M726.5 387V390.5M729.4 387V392.5M732.2 387V390.5M735.1 387V394M737.9 387V390.5M740.8 387V392.5M743.6 387V390.5M746.5 387V394M749.3 387V390.5M752.2 387V392.5M755.0 387V390.5M757.9 387V395.5M760.7 387V390.5M763.6 387V392.5M766.4 387V390.5M769.3 387V394M772.1 387V390.5M775.0 387V392.5M777.8 387V390.5M780.7 387V394M783.5 387V390.5M786.4 387V392.5M789.2 387V390.5M794.9 387V390.5M797.7 387V392.5M800.6 387V390.5M803.4 387V394M806.3 387V390.5M809.1 387V392.5M812.0 387V390.5M814.8 387V394M817.7 387V390.5M820.5 387V392.5M823.4 387V390.5M826.2 387V395.5M829.1 387V390.5M831.9 387V392.5M834.8 387V390.5M837.6 387V394M840.5 387V390.5M843.3 387V392.5M846.2 387V390.5M849.0 387V394M851.9 387V390.5M854.7 387V392.5M857.6 387V390.5M863.3 387V390.5M866.1 387V392.5M869.0 387V390.5M871.8 387V394M874.7 387V390.5M877.5 387V392.5M880.4 387V390.5M883.2 387V394M886.1 387V390.5M888.9 387V392.5M891.8 387V390.5M894.6 387V395.5M897.5 387V390.5M900.3 387V392.5M903.2 387V390.5M906.0 387V394M908.9 387V390.5M911.7 387V392.5M914.6 387V390.5M917.4 387V394M920.3 387V390.5M923.1 387V392.5M926.0 387V390.5M931.6 387V390.5M934.5 387V392.5M937.3 387V390.5M940.2 387V394M943.0 387V390.5M945.9 387V392.5M948.7 387V390.5M951.6 387V394M954.4 387V390.5M957.3 387V392.5M960.1 387V390.5M963.0 387V395.5M965.8 387V390.5M968.7 387V392.5M971.5 387V390.5M974.4 387V394M977.2 387V390.5M980.1 387V392.5M982.9 387V390.5M985.8 387V394M988.6 387V390.5M991.5 387V392.5M994.3 387V390.5M1000.0 387V390.5M1002.9 387V392.5M1005.7 387V390.5M1008.6 387V394M1011.4 387V390.5M1014.3 387V392.5M1017.1 387V390.5M1020.0 387V394M1022.8 387V390.5M1025.7 387V392.5M1028.5 387V390.5M1031.4 387V395.5M1034.2 387V390.5M1037.1 387V392.5M1039.9 387V390.5M1042.8 387V394M1045.6 387V390.5M1048.5 387V392.5M1051.3 387V390.5M1054.2 387V394M1057.0 387V390.5M1059.9 387V392.5M1062.7 387V390.5M1068.4 387V390.5M1071.2 387V392.5M1074.1 387V390.5M1076.9 387V394M1079.8 387V390.5M1082.6 387V392.5M1085.5 387V390.5M1088.3 387V394M1091.2 387V390.5M1094.0 387V392.5M1096.9 387V390.5M1099.7 387V395.5M1102.6 387V390.5M1105.4 387V392.5M1108.3 387V390.5M1111.1 387V394M1114.0 387V390.5M1116.8 387V392.5M1119.7 387V390.5M1122.5 387V394M1125.4 387V390.5M1128.2 387V392.5M1131.1 387V390.5M1136.8 387V390.5M1139.6 387V392.5M1142.5 387V390.5M1145.3 387V394M1148.2 387V390.5M1151.0 387V392.5M1153.9 387V390.5M1156.7 387V394M1159.6 387V390.5M1162.4 387V392.5M1165.3 387V390.5M1168.1 387V395.5M1171.0 387V390.5M1173.8 387V392.5M1176.7 387V390.5M1179.5 387V394M1182.4 387V390.5M1185.2 387V392.5M1188.1 387V390.5M1190.9 387V394M1193.8 387V390.5M1196.6 387V392.5M1199.5 387V390.5" stroke="#2c2c32" stroke-width="1"/><path d="M176.7 387V397M245.0 387V399M313.4 387V397M450.2 387V397M518.5 387V399M586.9 387V397M723.7 387V397M792.0 387V399M860.4 387V397M997.2 387V397M1065.5 387V399M1133.9 387V397" stroke="#34343a" stroke-width="1"/><path d="M381.5 387V684" stroke="#2c2c32" stroke-width="1"/><path d="M928.5 387V684" stroke="#2c2c32" stroke-width="1"/><path d="M115.2 334.6Q115.2 333.8 116 333.8H127.2Q128 333.8 128 334.6V338.4L122.4 343.8H120.8L115.2 338.4Z" fill="#a4a4a8"/><path d="M121.6 343V386" stroke="#a4a4a8" stroke-width="1.4"/><path d="M649 388.4Q649 387.4 650 387.4H660.4Q661.4 387.4 661.4 388.4V392.2L656.2 397.6H654.4L649 392.2Z" fill="#a4a4a8"/><path d="M655.3 396V684" stroke="#a4a4a8" stroke-width="1.3"/><rect x="1175.6" y="95.6" width="7" height="188" fill="#2d2d33" stroke="#141417" stroke-width="1"/><rect x="1183.8" y="95.6" width="7" height="188" fill="#2d2d33" stroke="#141417" stroke-width="1"/></svg>
<span class="t" style="left:127.5px;top:338.4px;font-size:8.6px;line-height:8.6px;color:#45454b;">01:00:00:00</span>
<span class="t" style="left:327.5px;top:338.4px;font-size:8.6px;line-height:8.6px;color:#45454b;">01:00:10:00</span>
<span class="t" style="left:527.5px;top:338.4px;font-size:8.6px;line-height:8.6px;color:#45454b;">01:00:20:00</span>
<span class="t" style="left:727.5px;top:338.4px;font-size:8.6px;line-height:8.6px;color:#45454b;">01:00:30:00</span>
<span class="t" style="left:927.5px;top:338.4px;font-size:8.6px;line-height:8.6px;color:#45454b;">01:00:40:00</span>
<span class="t" style="left:1127.5px;top:338.4px;font-size:8.6px;line-height:8.6px;color:#45454b;">01:00:50:00</span>
<span class="t" style="left:113px;top:398.4px;font-size:8.6px;line-height:8.6px;color:#45454b;">00:59:56:00</span>
<span class="t" style="left:386.5px;top:398.4px;font-size:8.6px;line-height:8.6px;color:#45454b;">00:59:58:00</span>
<span class="t" style="left:660.5px;top:398.4px;font-size:8.6px;line-height:8.6px;color:#45454b;">01:00:00:00</span>
<span class="t" style="left:933.5px;top:398.4px;font-size:8.6px;line-height:8.6px;color:#45454b;">01:00:02:00</span>
<span class="t" style="left:1140px;top:90.8px;font-size:8.4px;line-height:8.4px;color:#5e5e64;width:33.4px;text-align:right;">0 -</span>
<span class="t" style="left:1140px;top:115.1px;font-size:8.4px;line-height:8.4px;color:#5e5e64;width:33.4px;text-align:right;">-5 -</span>
<span class="t" style="left:1140px;top:138.79999999999998px;font-size:8.4px;line-height:8.4px;color:#5e5e64;width:33.4px;text-align:right;">-10 -</span>
<span class="t" style="left:1140px;top:161.79999999999998px;font-size:8.4px;line-height:8.4px;color:#5e5e64;width:33.4px;text-align:right;">-15 -</span>
<span class="t" style="left:1140px;top:185.2px;font-size:8.4px;line-height:8.4px;color:#5e5e64;width:33.4px;text-align:right;">-20 -</span>
<span class="t" style="left:1140px;top:223.29999999999998px;font-size:8.4px;line-height:8.4px;color:#5e5e64;width:33.4px;text-align:right;">-30 -</span>
<span class="t" style="left:1140px;top:251.4px;font-size:8.4px;line-height:8.4px;color:#5e5e64;width:33.4px;text-align:right;">-40 -</span>
<span class="t" style="left:1140px;top:266.20000000000005px;font-size:8.4px;line-height:8.4px;color:#5e5e64;width:33.4px;text-align:right;">-50 -</span>
<div style="left:0px;top:681px;width:1200px;height:1px;background:#17181b;"></div>
<div style="left:0px;top:682px;width:1200px;height:1.5px;background:#292a2f;"></div>
<div style="left:0px;top:683.4px;width:1200px;height:1px;background:#121316;"></div>
<div style="left:0px;top:684.4px;width:1200px;height:25.6px;background:#1a1b1e;"></div>
<div style="left:351px;top:684px;width:98.4px;height:24px;background:#000;"></div>
<div style="left:351px;top:707.6px;width:98.4px;height:2.6px;background:#e8453c;"></div>
<span class="t" style="left:43.8px;top:693.5px;font-size:10.9px;line-height:10.9px;color:#dcdcdc;">DaVinci Resolve 18</span>
<div style="left:148px;top:691px;width:71px;height:13px;background:#b5442f;border-radius:2px;"></div>
<span class="t" style="left:155.8px;top:696.6px;font-size:6.6px;line-height:6.6px;color:#f3d9d2;font-weight:bold;letter-spacing:0.75px;">PUBLIC BETA</span>
<div style="left:0px;top:710px;width:1200px;height:40px;background:linear-gradient(90deg,#d7e4f5 0%,#e6edf9 3%,#ecf0fb 12%,#e9ecfa 17%,#e4e6f8 21%,#e9edfa 27%,#e6ebf8 45%,#e2e9f6 60%,#dfe7f5 67%,#e1e9f6 80%,#e4ebf7 100%);"></div>
<div style="left:818px;top:715px;width:140px;height:40px;background:radial-gradient(ellipse 62px 26px at 42% 60%,rgba(250,251,255,1) 0%,rgba(247,249,254,.92) 55%,rgba(240,244,251,0) 100%);"></div>
<div style="left:0px;top:710px;width:1200px;height:1px;background:rgba(255,255,255,.35);"></div>
<span class="t" style="left:1141px;top:719.6px;font-size:9px;line-height:9px;color:#1c1c1c;letter-spacing:0.1px;">18:29</span>
<span class="t" style="left:1123.6px;top:733.2px;font-size:9.1px;line-height:9.1px;color:#1c1c1c;letter-spacing:0.75px;">2022/7/4</span>
<svg class="g" style="left:1029px;top:735.4px" width="1" height="1"><text x="0" y="0" font-size="13" fill="#1c1c1c">英</text></svg>
<svg class="layer" width="1200" height="750" viewBox="0 0 1200 750" style=""><g fill="#f4f4f4"><circle cx="29.6" cy="692.6" r="3.5"/><circle cx="25" cy="700" r="3.5"/><circle cx="34.3" cy="700" r="3.5"/><path d="M29.6 693L27 698.4H32.2Z"/></g><rect x="293.8" y="692.2" width="13.4" height="11" rx="1" fill="none" stroke="#7c7c80" stroke-width="1.1"/><path d="M293.8 694.6H307.2" stroke="#7c7c80" stroke-width="1"/><path d="M296 701.6L299 698L300.8 700L302.4 698.6L305 701.6Z" fill="#7c7c80"/><circle cx="297.2" cy="697" r=".9" fill="#7c7c80"/><path d="M397.2 691.4H401.6L399.8 701.4H395.4Z" fill="#10244f" stroke="#2a5ccc" stroke-width="1.2" stroke-linejoin="round"/><path d="M404.4 691.4H409Q410.4 691.4 410.1 692.8L408.8 700Q408.6 701.4 407.2 701.4H402.6Z" fill="#132b60" stroke="#2f66d8" stroke-width="1.3" stroke-linejoin="round"/><path d="M391 693.6H395.6M389.2 696.4H395M390.6 699.2H394.6" stroke="#d4d4da" stroke-width="1.1" stroke-linecap="round"/><path d="M403.2 688.8L400 703.2" stroke="#d8423a" stroke-width="1" stroke-linecap="round"/><path d="M500.6 689.8V703.6" stroke="#8c8c90" stroke-width="1.1"/><g fill="#8c8c90"><rect x="494.4" y="692" width="4.8" height="2.2"/><rect x="502" y="692" width="6.6" height="2.2"/><rect x="491.4" y="695.8" width="7.8" height="2.2"/><rect x="502" y="695.8" width="4.8" height="2.2"/><rect x="493" y="699.6" width="6.2" height="2.2"/><rect x="502" y="699.6" width="8" height="2.2"/></g><circle cx="500.6" cy="690" r="1.1" fill="#8c8c90"/><path d="M599.6 703L606.6 691.8" stroke="#8c8c90" stroke-width="2.6" stroke-linecap="round"/><path d="M599.8 702.6L606.4 692.2" stroke="#1b1b1e" stroke-width=".8"/><g fill="#8c8c90"><path d="M596.6 692.4l.6 1.3 1.3 .6-1.3 .6-.6 1.3-.6-1.3-1.3-.6 1.3-.6z"/><path d="M601.2 689.4l.45 .95 .95 .45-.95 .45-.45 .95-.45-.95-.95-.45 .95-.45z"/><circle cx="597.8" cy="697.8" r=".6"/><circle cx="594.6" cy="690.6" r=".5"/></g><circle cx="699.8" cy="691.2" r="1.25" fill="#8c8c90"/><circle cx="703.8" cy="692.8" r="0.9" fill="#8c8c90"/><circle cx="705.4" cy="696.8" r="1.25" fill="#8c8c90"/><circle cx="703.8" cy="700.8" r="0.9" fill="#8c8c90"/><circle cx="699.8" cy="702.4" r="1.25" fill="#8c8c90"/><circle cx="695.8" cy="700.8" r="0.9" fill="#8c8c90"/><circle cx="694.2" cy="696.8" r="1.25" fill="#8c8c90"/><circle cx="695.8" cy="692.8" r="0.9" fill="#8c8c90"/><path d="M798.2 700.6V692.8L805.8 691.2V699.2" fill="none" stroke="#8c8c90" stroke-width="1.3" stroke-linejoin="round"/><path d="M798.2 694.4L805.8 692.8" stroke="#8c8c90" stroke-width="1.4"/><ellipse cx="796.8" cy="700.8" rx="2.1" ry="1.7" fill="#8c8c90"/><ellipse cx="804.4" cy="699.4" rx="2.1" ry="1.7" fill="#8c8c90"/><g fill="none" stroke="#6a6a6e" stroke-width="1" stroke-linejoin="round"><path d="M906.4 690.6Q901.4 690.8 898 695.2L896.6 698.4L899 700.8L902.2 699.4Q906.4 696 906.4 690.6Z"/><path d="M898 695.4L894.2 695.8L892.6 698L896.6 698.4M902 699.4L901.6 703.2L899.4 704.8L899 700.8"/><circle cx="902.4" cy="694.8" r="1.2"/><path d="M895.4 700.2L893 703.6L896.6 702"/></g><path d="M1131 692.6L1137.4 698.2H1135.8V702.8H1132.6V699.6H1129.4V702.8H1126.2V698.2H1124.6Z" fill="#a9a9ad"/><g transform="translate(1171.8 697.8)"><circle r="3.4" fill="none" stroke="#a4a4a8" stroke-width="1.9"/><rect x="-1.1" y="-6" width="2.2" height="2.4" fill="#a4a4a8" transform="rotate(0)"/><rect x="-1.1" y="-6" width="2.2" height="2.4" fill="#a4a4a8" transform="rotate(45)"/><rect x="-1.1" y="-6" width="2.2" height="2.4" fill="#a4a4a8" transform="rotate(90)"/><rect x="-1.1" y="-6" width="2.2" height="2.4" fill="#a4a4a8" transform="rotate(135)"/><rect x="-1.1" y="-6" width="2.2" height="2.4" fill="#a4a4a8" transform="rotate(180)"/><rect x="-1.1" y="-6" width="2.2" height="2.4" fill="#a4a4a8" transform="rotate(225)"/><rect x="-1.1" y="-6" width="2.2" height="2.4" fill="#a4a4a8" transform="rotate(270)"/><rect x="-1.1" y="-6" width="2.2" height="2.4" fill="#a4a4a8" transform="rotate(315)"/></g><defs><linearGradient id="wl" x1="0" y1="0" x2="1" y2="1"><stop offset="0" stop-color="#55c6f5"/><stop offset="1" stop-color="#0a6fd6"/></linearGradient><linearGradient id="fold" x1="0" y1="0" x2="0" y2="1"><stop offset="0" stop-color="#ffd970"/><stop offset="1" stop-color="#f4b62c"/></linearGradient><linearGradient id="dvr" x1="0" y1="0" x2="1" y2="1"><stop offset="0" stop-color="#2a3c52"/><stop offset="1" stop-color="#14141a"/></linearGradient></defs><rect x="696.4" y="714.6" width="29.6" height="33" rx="3" fill="#f1f4fa" fill-opacity=".85"/><rect x="481.4" y="721.4" width="9.2" height="9.2" rx=".6" fill="url(#wl)"/><rect x="491.5" y="721.4" width="9.2" height="9.2" rx=".6" fill="url(#wl)"/><rect x="481.4" y="731.5" width="9.2" height="9.2" rx=".6" fill="url(#wl)"/><rect x="491.5" y="731.5" width="9.2" height="9.2" rx=".6" fill="url(#wl)"/><circle cx="529.6" cy="728.6" r="6.5" fill="#f0f3fa" fill-opacity=".6" stroke="#1b1b1f" stroke-width="2"/><path d="M524.8 733.6L520.4 738.2" stroke="#1b1b1f" stroke-width="2.4" stroke-linecap="round"/><rect x="560.6" y="720.6" width="13.6" height="13.6" rx="1.4" fill="#fbfbfd" stroke="#c9ccd3" stroke-width=".6"/><rect x="563" y="726.6" width="8" height="7.4" fill="#c2c2c6"/><path d="M554.6 725.4H561.8V733.4H570V740H554.6Z" fill="#1b1b1f"/><path d="M591.4 723.4Q591.4 722 592.8 722H598.2L600.2 724H609.8Q611.2 724 611.2 725.4V738Q611.2 739.4 609.8 739.4H592.8Q591.4 739.4 591.4 738Z" fill="#f0a91d"/><path d="M591.4 727.2Q591.4 725.8 592.8 725.8H609.8Q611.2 725.8 611.2 727.2V738Q611.2 739.4 609.8 739.4H592.8Q591.4 739.4 591.4 738Z" fill="url(#fold)"/><path d="M596.4 739.4V735.8Q596.4 734.6 597.6 734.6H605Q606.2 734.6 606.2 735.8V739.4Z" fill="#1f7fd6"/><circle cx="637.6" cy="730" r="9.4" fill="#fff"/><path d="M637.6 730L629.46 725.30A9.4 9.4 0 0 1 645.74 725.30Z" fill="#e33b2e"/><path d="M637.6 730L645.74 725.30A9.4 9.4 0 0 1 637.6 739.4Z" fill="#fbc116"/><path d="M637.6 730L637.6 739.4A9.4 9.4 0 0 1 629.46 725.30Z" fill="#2da94f"/><path d="M633.90 727.80L629.46 725.30A9.4 9.4 0 0 1 645.74 725.30L641.5 725.30Z" fill="#e33b2e"/><circle cx="637.6" cy="730" r="4.4" fill="#fff"/><circle cx="637.6" cy="730" r="3.4" fill="#3c7fe6"/><rect x="670.4" y="721.4" width="14.6" height="17" rx="1.2" fill="#1a80d8"/><rect x="670.4" y="721.4" width="7.4" height="5.8" fill="#0f5fb4"/><rect x="677.8" y="721.4" width="7.2" height="5.8" fill="#3aa0ee"/><rect x="677.8" y="727.2" width="7.2" height="5.6" fill="#1f7fd6"/><rect x="670.4" y="727.2" width="7.4" height="5.6" fill="#1568bf"/><path d="M670.4 732.8L685 738.4H670.4Z" fill="#0e4e98"/><path d="M685 732.8L672 738.4H685Z" fill="#2f97ea"/><rect x="663.8" y="724.6" width="10.8" height="10.8" rx="1.2" fill="#0d5fb8"/><ellipse cx="669.2" cy="730" rx="2.6" ry="3" fill="none" stroke="#fff" stroke-width="1.5"/><rect x="703.2" y="722" width="16.2" height="16.2" rx="3.4" fill="url(#dvr)"/><circle cx="711.4" cy="727" r="2.6" fill="#4f9be8"/><circle cx="707.8" cy="732.8" r="2.6" fill="#d4e070"/><circle cx="714.8" cy="732.6" r="2.6" fill="#e86a96"/><rect x="705" y="743.8" width="12.6" height="3" rx="1.5" fill="#0a63c9"/><path d="M981.6 733L986.2 728.2L990.8 733" fill="none" stroke="#1d1d20" stroke-width="1.5" stroke-linecap="round" stroke-linejoin="round"/><rect x="1007.6" y="724.2" width="4.6" height="8.2" rx="2.3" fill="#cfe1f6" stroke="#2f76c6" stroke-width="1.1"/><path d="M1005.6 730.4A4.3 4.3 0 0 0 1014.2 730.4M1009.9 734.8V737" fill="none" stroke="#2f76c6" stroke-width="1.1" stroke-linecap="round"/><g fill="none" stroke="#1d1d20" stroke-width="1.2" stroke-linecap="round"><path d="M1056.6 728.6Q1063 722.6 1069.4 728.6"/><path d="M1058.8 730.8Q1063 727 1067.2 730.8"/><path d="M1060.9 733Q1063 731.2 1065.1 733"/></g><circle cx="1063" cy="734.6" r="1" fill="#1d1d20"/><path d="M1076.6 728.4H1078.6L1081.6 725.8V734.6L1078.6 732H1076.6Z" fill="none" stroke="#1d1d20" stroke-width="1.1" stroke-linejoin="round"/><path d="M1083.6 727.8Q1085 730.2 1083.6 732.6M1085.6 726Q1087.8 730.2 1085.6 734.4" fill="none" stroke="#1d1d20" stroke-width="1" stroke-linecap="round"/><rect x="1099.8" y="726.2" width="8.4" height="7.6" rx="1.4" fill="none" stroke="#1d1d20" stroke-width="1.3"/><rect x="1108.6" y="728.4" width="1.3" height="3.2" rx=".5" fill="#1d1d20"/><path d="M1101 733L1102.6 728.6Q1102.9 727.6 1104 727.6H1107V733Z" fill="#1d1d20"/><path d="M1097.6 724.6V727M1099.6 724.6V727" stroke="#1d1d20" stroke-width="1"/><path d="M1096.6 727H1100.6V728.4Q1100.6 730 1098.6 730T1096.6 728.4Z" fill="#1d1d20"/><path d="M1098.6 730V732.4H1100" stroke="#1d1d20" stroke-width="1" fill="none"/><path d="M1177.6 724.8Q1183.6 728.4 1180.4 733.2Q1177.6 736.6 1172.8 734.2Q1176.4 733.4 1177.6 730.2Q1178.6 727.4 1177.6 724.8Z" fill="none" stroke="#1d1d20" stroke-width="1.1" stroke-linejoin="round"/></svg>
<div style="left:102px;top:448px;width:923px;height:141px;background:#dddde2;border-radius:7px;box-shadow:0 2px 8px rgba(0,0,0,.45);"></div>
<div style="left:565.6px;top:450.6px;width:224.4px;height:136px;background:#f6f6f9;border-radius:4px;"></div>
<svg class="g" style="left:112px;top:468.3px" width="1" height="1"><text x="0" y="0" font-size="10.4" fill="#1a1a1a">桌面 1</text></svg>
<svg class="g" style="left:342px;top:468.3px" width="1" height="1"><text x="0" y="0" font-size="10.4" fill="#1a1a1a">桌面 2</text></svg>
<svg class="g" style="left:572px;top:468.3px" width="1" height="1"><text x="0" y="0" font-size="10.4" fill="#1a1a1a">桌面 3</text></svg>
<svg class="g" style="left:804px;top:468.3px" width="1" height="1"><text x="0" y="0" font-size="10.4" fill="#1a1a1a">新建桌面</text></svg>
<div style="left:805px;top:478px;width:206px;height:101px;background:#f4f4f6;border-radius:4px;"></div>
<svg class="layer" width="1200" height="750" viewBox="0 0 1200 750" style=""><defs><linearGradient id="wp" x1="0" y1="0" x2="1" y2=".35"><stop offset="0" stop-color="#8fb3d3"/><stop offset=".45" stop-color="#b3cde2"/><stop offset="1" stop-color="#a9c3da"/></linearGradient><radialGradient id="wpg" cx=".55" cy=".2" r=".6"><stop offset="0" stop-color="#c9dcea" stop-opacity=".55"/><stop offset="1" stop-color="#c9dcea" stop-opacity="0"/></radialGradient><linearGradient id="b1" x1="0" y1="0" x2="1" y2="1"><stop offset="0" stop-color="#2f8df5"/><stop offset=".5" stop-color="#1565e0"/><stop offset="1" stop-color="#0b3aa8"/></linearGradient><linearGradient id="b2" x1="0" y1="0" x2="0" y2="1"><stop offset="0" stop-color="#2a86f2"/><stop offset="1" stop-color="#0d47c0"/></linearGradient><linearGradient id="b3" x1="0" y1="1" x2="1" y2="0"><stop offset="0" stop-color="#3aa0f8"/><stop offset="1" stop-color="#1462dd"/></linearGradient><linearGradient id="b4" x1="0" y1="0" x2="1" y2="0"><stop offset="0" stop-color="#0a2f96"/><stop offset="1" stop-color="#124fcb"/></linearGradient><linearGradient id="qq" x1="0" y1="0" x2="1" y2="0"><stop offset="0" stop-color="#2f8ff0"/><stop offset=".45" stop-color="#5f8ef2"/><stop offset=".8" stop-color="#b585ea"/><stop offset="1" stop-color="#7d7fe8"/></linearGradient><linearGradient id="arr" gradientUnits="userSpaceOnUse" x1="698" y1="0" x2="750" y2="0"><stop offset="0" stop-color="#58b4ea"/><stop offset="1" stop-color="#1f8fd9"/></linearGradient><symbol id="bloom" viewBox="0 0 206 103" overflow="hidden"><rect width="206" height="103" fill="url(#wp)"/><rect width="206" height="103" fill="url(#wpg)"/><clipPath id="bclip"><path d="M31 104C33 93 36 84 39 76C36 71 38 64 42 58C44 50 50 41 57 35C64 29 76 26 87 25C92 22 98 16 105 11C113 6 124 2 135 3C146 4 155 12 160 21C165 30 166 42 163 51C161 56 158 60 156 62C163 60 174 62 184 68C191 73 194 82 194 90C194 95 192 100 190 104Z"/></clipPath><filter id="bsoft" x="-5%" y="-5%" width="110%" height="110%"><feGaussianBlur stdDeviation="1"/></filter><path d="M31 104C33 93 36 84 39 76C36 71 38 64 42 58C44 50 50 41 57 35C64 29 76 26 87 25C92 22 98 16 105 11C113 6 124 2 135 3C146 4 155 12 160 21C165 30 166 42 163 51C161 56 158 60 156 62C163 60 174 62 184 68C191 73 194 82 194 90C194 95 192 100 190 104Z" fill="#1459d6"/><g clip-path="url(#bclip)"><g filter="url(#bsoft)"><rect x="20" y="0" width="186" height="110" fill="#1459d6"/><path d="M88 26C76 26 64 29 57 35C50 41 44 50 43 58C50 50 60 45 72 44C84 43 96 46 104 52C106 44 100 34 88 26Z" fill="#2379ea"/><path d="M88 26C80 27 73 30 68 35C76 33 84 34 90 38C96 42 101 47 104 52C106 44 100 34 88 26Z" fill="#2e8af3"/><path d="M62 36C58 39 56 43 57 46C62 42 70 40 78 41C72 37 66 35 62 36Z" fill="#0f49bd" fill-opacity=".8"/><path d="M40 63C48 50 66 42 86 44C100 46 108 54 110 66C112 80 108 92 107 104L106.1 104C107 92.8 110.5 81.5 108.6 68.3C106.6 56.5 98.8 48.5 85 46.5C65.6 44.5 48 52.1 39.8 64.6Z" fill="#3a98f8"/><path d="M39.8 64.5C48 52 65.6 44.4 85 46.4C98.8 48.4 106.7 56.4 108.7 68.2C110.6 81.4 107 92.8 106.1 104L104.9 104C105.6 93.9 108.7 83.3 106.9 71.2C104.9 59.7 97.2 51.7 83.6 49.7C65.1 47.7 48 54.7 39.5 66.6Z" fill="#2278ea"/><path d="M39.5 66.5C48 54.7 65.1 47.6 83.7 49.6C97.2 51.6 105 59.6 107 71.1C108.7 83.3 105.7 93.9 104.9 104L104 104C104.6 94.7 107.3 84.7 105.6 73.4C103.6 62.1 96 54.1 82.6 52.1C64.7 50.1 48 56.7 39.3 68.1Z" fill="#0f4cc2"/><path d="M39.3 68C48 56.7 64.7 50 82.7 52C96 54 103.7 62 105.7 73.3C107.3 84.7 104.7 94.7 104 104L103.1 104C103.6 95.5 105.9 86.1 104.3 75.6C102.3 64.5 94.8 56.5 81.6 54.5C64.3 52.5 48 58.7 39.1 69.6Z" fill="#3a98f8"/><path d="M39.1 69.5C48 58.7 64.3 52.4 81.7 54.4C94.8 56.4 102.4 64.4 104.4 75.5C105.9 86.1 103.7 95.5 103.1 104L101.9 104C102.3 96.6 104 88 102.6 78.6C100.6 67.7 93.2 59.7 80.3 57.7C63.7 55.7 48 61.4 38.9 71.6Z" fill="#2278ea"/><path d="M38.9 71.5C48 61.3 63.7 55.6 80.3 57.6C93.2 59.6 100.6 67.6 102.6 78.5C104.1 87.9 102.3 96.5 101.9 104L101 104C101.3 97.4 102.6 89.4 101.3 80.8C99.3 70.1 92 62.1 79.3 60.1C63.3 58.1 48 63.4 38.7 73.1Z" fill="#0f4cc2"/><path d="M38.7 73C48 63.3 63.3 58 79.3 60C92 62 99.3 70 101.3 80.7C102.7 89.3 101.3 97.3 101 104L100.1 104C100.3 98.2 101.2 90.8 100 83C98 72.5 90.8 64.5 78.3 62.5C62.9 60.5 48 65.4 38.5 74.6Z" fill="#3a98f8"/><path d="M38.5 74.5C48 65.3 62.9 60.4 78.3 62.4C90.8 64.4 98 72.4 100 82.9C101.3 90.7 100.3 98.1 100.1 104L98.9 104C99 99.2 99.3 92.7 98.2 85.9C96.2 75.7 89.2 67.7 77 65.7C62.4 63.7 48 68.1 38.2 76.6Z" fill="#2278ea"/><path d="M38.2 76.5C48 68 62.4 63.6 77 65.6C89.2 67.6 96.3 75.6 98.3 85.8C99.4 92.6 99 99.2 98.9 104L98 104C98 100 97.9 94.1 96.9 88.1C94.9 78.1 88 70.1 76 68.1C62 66.1 48 70.1 38 78.1Z" fill="#0f4cc2"/><path d="M31 104C33 92 38 82 48 78C60 74 74 78 82 86C88 92 90 98 90 104L87.3 104C87.3 98.9 85.7 93.6 80.6 88.5C73.6 81.2 61.4 77.6 50.5 81C41.2 84.5 36.6 93.4 34.8 104Z" fill="#3d9cfa"/><path d="M34.7 104C36.5 93.4 41.1 84.4 50.4 81C61.4 77.5 73.6 81.1 80.6 88.5C85.7 93.6 87.4 98.9 87.4 104L84.3 104C84.3 99.9 83.1 95.4 79 91.3C73.2 84.8 63 81.6 53.3 84.4C44.8 87.3 40.6 95 39 104Z" fill="#2a84f0"/><path d="M38.9 104C40.5 95 44.8 87.2 53.2 84.4C63 81.5 73.2 84.8 79 91.2C83.1 95.4 84.4 99.9 84.4 104L82.4 104C82.4 100.5 81.4 96.5 78 93.1C73 87.1 64 84.1 55.1 86.6C47.1 89.1 43.1 96 41.6 104Z" fill="#1558d2"/><path d="M41.5 104C43 96 47 89 55 86.5C64 84 73 87 78 93C81.5 96.5 82.5 100.5 82.5 104L79.8 104C79.8 101.4 79.2 98.1 76.6 95.5C72.6 90.2 65.4 87.6 57.5 89.5C50.2 91.5 46.6 97.4 45.3 104Z" fill="#3d9cfa"/><path d="M45.2 104C46.5 97.4 50.2 91.5 57.5 89.5C65.4 87.5 72.7 90.2 76.6 95.4C79.2 98.1 79.9 101.4 79.9 104L76.8 104C76.8 102.4 76.6 99.9 75 98.3C72.2 93.8 67 91.6 60.3 92.9C53.8 94.3 50.6 99 49.5 104Z" fill="#2a84f0"/><path d="M49.4 104C50.5 99 53.8 94.2 60.2 92.9C67 91.5 72.2 93.8 75 98.2C76.6 99.9 76.9 102.4 76.9 104L74.9 104C74.9 103 74.9 101 74 100.1C72 96.1 68 94.1 62.1 95.1C56.1 96.1 53.1 100 52.1 104Z" fill="#1558d2"/><path d="M52 104C53 100 56 96 62 95C68 94 72 96 74 100L75 104Z" fill="#1a62da"/><path d="M107 104C108 90 112 82 120 75C130 68 150 66 158 58C166 48 167 32 162 22C156 10 146 3 134 3C120 3 108 10 98 19C94 23 91 25 88 26L88.4 26.9C91.3 25.9 94.3 24 98.2 20.2C107.9 11.5 119.6 4.8 133.3 4.8C145.1 4.7 154.9 11.5 160.9 23.1C165.9 32.9 165 48.6 157.1 58.4C149.3 66.3 129.7 68.4 119.9 75.3C112 82.2 108.1 90.2 107.1 104Z" fill="#3d9afa"/><path d="M107.1 104C108.1 90.2 112 82.2 119.9 75.3C129.8 68.3 149.4 66.3 157.2 58.4C165.1 48.5 166 32.8 161 23C155.1 11.3 145.2 4.5 133.4 4.5C119.7 4.6 107.9 11.3 98.2 20C94.2 23.9 91.3 25.8 88.3 26.8L89.1 28.4C91.9 27.5 94.8 25.8 98.5 22.2C107.8 14.2 119 8 132.1 7.8C143.5 7.7 153 14 159 25.1C164 34.5 163.2 49.6 155.6 59.2C148.1 66.9 129.2 69 119.7 75.8C112.1 82.7 108.3 90.5 107.3 104Z" fill="#1e6fe6"/><path d="M107.3 104C108.2 90.5 112.1 82.6 119.8 75.8C129.3 69 148.1 66.9 155.7 59.1C163.3 49.5 164.1 34.3 159.1 25C153.2 13.8 143.6 7.4 132.2 7.6C119 7.8 107.8 14 98.5 22.1C94.7 25.7 91.9 27.4 89 28.3L89.8 29.9C92.5 29.1 95.2 27.6 98.8 24.3C107.7 16.9 118.3 11.2 131 10.9C141.9 10.6 151.2 16.5 157 27.1C162 36 161.4 50.6 154.1 59.9C146.8 67.5 128.8 69.7 119.6 76.4C112.1 83.1 108.4 90.8 107.6 104Z" fill="#0b37a6"/><path d="M107.5 104C108.4 90.8 112.1 83.1 119.6 76.3C128.8 69.6 146.9 67.5 154.2 59.9C161.6 50.6 162.2 35.9 157.2 27C151.3 16.3 142 10.4 131 10.7C118.4 10.9 107.7 16.7 98.8 24.1C95.2 27.4 92.5 29 89.7 29.8L90.1 30.6C92.8 30 95.5 28.4 99 25.3C107.7 18.3 118 12.7 130.4 12.4C141 12.1 150.2 17.8 156.1 28.1C161.1 36.8 160.6 51.1 153.4 60.3C146.2 67.8 128.5 70 119.5 76.7C112.2 83.3 108.5 91 107.7 104Z" fill="#3d9afa"/><path d="M107.6 104C108.5 91 112.2 83.3 119.5 76.6C128.5 69.9 146.3 67.8 153.5 60.3C160.7 51.1 161.2 36.7 156.2 28C150.4 17.6 141.2 11.9 130.5 12.2C118.1 12.5 107.7 18.1 99 25.1C95.5 28.3 92.8 29.8 90.1 30.5L90.8 32.1C93.4 31.6 96 30.2 99.3 27.3C107.6 20.9 117.4 15.9 129.2 15.5C139.4 15 148.3 20.3 154.1 30.1C159.1 38.3 158.8 52.2 151.9 61.1C145 68.4 128 70.6 119.3 77.2C112.2 83.8 108.7 91.3 107.9 104Z" fill="#1e6fe6"/><path d="M107.9 104C108.6 91.3 112.2 83.7 119.4 77.1C128.1 70.6 145.1 68.4 152 61C158.9 52.1 159.3 38.2 154.3 29.9C148.5 20.1 139.6 14.8 129.3 15.2C117.4 15.7 107.6 20.7 99.3 27.2C95.9 30.1 93.4 31.4 90.8 32L91.5 33.6C94 33.2 96.5 32 99.6 29.4C107.5 23.6 116.7 19.1 128 18.5C137.8 18 146.5 22.8 152.2 32.1C157.2 39.9 157 53.2 150.4 61.8C143.7 69 127.5 71.3 119.2 77.7C112.3 84.2 108.8 91.6 108.1 104Z" fill="#0b37a6"/><path d="M108.1 104C108.8 91.6 112.3 84.1 119.2 77.7C127.6 71.2 143.8 69 150.5 61.8C157.1 53.1 157.3 39.8 152.3 31.9C146.6 22.6 137.9 17.8 128.1 18.3C116.8 18.8 107.5 23.4 99.6 29.2C96.4 31.9 94 33.1 91.5 33.5L91.9 34.4C94.3 34 96.7 32.9 99.8 30.4C107.4 25 116.4 20.7 127.4 20.1C137 19.5 145.5 24.1 151.2 33.1C156.2 40.7 156.1 53.7 149.6 62.2C143.1 69.3 127.3 71.6 119.1 78C112.3 84.4 108.9 91.8 108.2 104Z" fill="#3d9afa"/><path d="M108.2 104C108.9 91.8 112.3 84.4 119.1 78C127.3 71.5 143.2 69.2 149.7 62.1C156.3 53.6 156.4 40.6 151.4 32.9C145.7 23.9 137.1 19.2 127.5 19.8C116.5 20.4 107.4 24.8 99.8 30.2C96.7 32.7 94.2 33.9 91.8 34.3L92.6 35.9C94.9 35.6 97.2 34.7 100.1 32.4C107.3 27.7 115.8 23.8 126.2 23.1C135.4 22.4 143.6 26.6 149.3 35.1C154.3 42.2 154.3 54.7 148.1 62.9C141.9 69.9 126.8 72.2 118.9 78.5C112.4 84.8 109.1 92.1 108.4 104Z" fill="#1e6fe6"/><path d="M108.4 104C109 92.1 112.3 84.8 119 78.5C126.9 72.2 142 69.8 148.2 62.9C154.5 54.6 154.4 42.1 149.4 34.9C143.8 26.4 135.5 22.2 126.3 22.9C115.8 23.6 107.3 27.5 100.1 32.3C97.1 34.5 94.8 35.5 92.5 35.8L93.3 37.4C95.5 37.2 97.7 36.4 100.4 34.5C107.2 30.3 115.1 27 125 26.2C133.8 25.4 141.8 29.1 147.4 37.1C152.4 43.8 152.6 55.7 146.6 63.7C140.6 70.5 126.3 72.9 118.8 79.1C112.4 85.3 109.2 92.4 108.6 104Z" fill="#0b37a6"/><path d="M108.6 104C109.2 92.4 112.4 85.2 118.8 79C126.4 72.8 140.7 70.4 146.7 63.6C152.7 55.7 152.5 43.7 147.5 36.9C141.9 28.9 133.9 25.2 125.1 26C115.2 26.8 107.2 30.1 100.4 34.3C97.6 36.3 95.4 37.1 93.2 37.3L93.6 38.1C95.8 38 97.9 37.3 100.6 35.5C107.1 31.7 114.8 28.6 124.5 27.7C133 26.9 140.8 30.4 146.4 38C151.4 44.6 151.7 56.2 145.9 64.1C140 70.8 126.1 73.2 118.7 79.3C112.4 85.5 109.3 92.6 108.7 104Z" fill="#3d9afa"/><path d="M108.7 104C109.3 92.6 112.4 85.4 118.7 79.3C126.1 73.2 140.1 70.7 146 64C151.8 56.2 151.5 44.5 146.5 37.9C141 30.2 133.1 26.6 124.5 27.5C114.8 28.4 107.1 31.5 100.6 35.3C97.9 37.2 95.7 37.9 93.6 38L94.3 39.6C96.4 39.6 98.4 39.1 100.9 37.5C107 34.4 114.2 31.8 123.3 30.8C131.4 29.8 138.9 32.9 144.5 40C149.5 46.1 149.9 57.3 144.4 64.8C138.8 71.4 125.6 73.8 118.5 79.9C112.5 85.9 109.5 92.9 108.9 104Z" fill="#1e6fe6"/><path d="M108.9 104C109.5 92.9 112.5 85.9 118.5 79.8C125.6 73.8 138.9 71.3 144.5 64.8C150 57.2 149.6 46 144.6 39.9C139.1 32.7 131.5 29.6 123.4 30.6C114.2 31.5 107 34.2 100.9 37.4C98.4 39 96.3 39.5 94.3 39.5L95 41.2C97 41.2 98.9 40.9 101.2 39.6C106.9 37.1 113.5 34.9 122.1 33.8C129.8 32.8 137.1 35.4 142.5 42C147.5 47.7 148.1 58.3 142.8 65.6C137.6 72 125.1 74.5 118.4 80.4C112.5 86.3 109.6 93.2 109.2 104Z" fill="#0b37a6"/><path d="M109.1 104C109.6 93.2 112.5 86.3 118.4 80.4C125.2 74.4 137.6 71.9 143 65.5C148.3 58.2 147.7 47.6 142.7 41.9C137.2 35.2 129.9 32.5 122.2 33.6C113.6 34.7 106.9 36.9 101.2 39.4C98.8 40.7 96.9 41.1 95 41L95.4 41.9C97.2 42 99.1 41.7 101.4 40.6C106.9 38.4 113.2 36.5 121.5 35.4C129 34.2 136.1 36.7 141.6 43C146.6 48.5 147.3 58.8 142.1 66C136.9 72.2 124.9 74.8 118.3 80.7C112.6 86.5 109.7 93.4 109.3 104Z" fill="#3d9afa"/><path d="M109.3 104C109.7 93.4 112.6 86.5 118.3 80.6C124.9 74.8 137 72.2 142.2 65.9C147.4 58.7 146.7 48.4 141.7 42.9C136.3 36.5 129.1 34 121.6 35.1C113.2 36.3 106.9 38.2 101.4 40.4C99.1 41.6 97.2 41.9 95.3 41.8L96.1 43.4C97.8 43.7 99.6 43.5 101.7 42.6C106.8 41.1 112.5 39.7 120.3 38.4C127.3 37.2 134.2 39.2 139.6 45C144.6 50 145.5 59.8 140.6 66.7C135.7 72.8 124.4 75.5 118.1 81.2C112.6 87 109.9 93.7 109.5 104Z" fill="#1e6fe6"/><path d="M109.5 104C109.9 93.7 112.6 86.9 118.1 81.2C124.4 75.4 135.8 72.8 140.7 66.6C145.6 59.7 144.8 49.9 139.8 44.9C134.4 39 127.5 37 120.4 38.2C112.6 39.4 106.8 40.9 101.7 42.5C99.6 43.4 97.8 43.5 96 43.3L96.8 44.9C98.4 45.3 100.1 45.3 102.1 44.7C106.6 43.8 111.9 42.9 119.1 41.5C125.7 40.1 132.4 41.7 137.7 47C142.7 51.6 143.7 60.8 139.1 67.5C134.5 73.4 123.9 76.1 118 81.8C112.7 87.4 110 94.1 109.7 104Z" fill="#0b37a6"/><path d="M109.7 104C110 94 112.7 87.4 118 81.7C124 76.1 134.6 73.4 139.2 67.4C143.8 60.8 142.8 51.5 137.8 46.8C132.5 41.6 125.9 39.9 119.2 41.3C111.9 42.6 106.7 43.6 102 44.5C100 45.2 98.4 45.1 96.7 44.8L97.1 45.7C98.7 46.1 100.3 46.2 102.2 45.7C106.6 45.1 111.6 44.4 118.5 43C124.9 41.6 131.4 43 136.7 48C141.7 52.4 142.8 61.3 138.3 67.8C133.8 73.7 123.7 76.4 117.9 82C112.7 87.6 110.1 94.2 109.8 104Z" fill="#3d9afa"/><path d="M109.8 104C110.1 94.2 112.7 87.6 117.9 82C123.7 76.4 133.9 73.7 138.4 67.8C143 61.3 141.9 52.3 136.9 47.8C131.6 42.8 125.1 41.4 118.6 42.8C111.6 44.2 106.6 44.9 102.2 45.5C100.3 46 98.7 45.9 97.1 45.6L97.8 47.2C99.3 47.7 100.8 47.9 102.5 47.7C106.5 47.8 110.9 47.6 117.4 46.1C123.3 44.6 129.5 45.5 134.8 50C139.8 53.9 141.1 62.4 136.8 68.6C132.6 74.3 123.2 77.1 117.7 82.6C112.8 88 110.3 94.5 110 104Z" fill="#1e6fe6"/><path d="M110 104C110.3 94.5 112.8 88 117.7 82.5C123.2 77 132.7 74.3 136.9 68.5C141.2 62.3 139.9 53.8 134.9 49.8C129.7 45.3 123.4 44.4 117.5 45.9C111 47.4 106.5 47.6 102.5 47.6C100.8 47.8 99.3 47.6 97.8 47.1L98.5 48.7C99.9 49.3 101.3 49.7 102.9 49.8C106.4 50.5 110.3 50.8 116.2 49.2C121.7 47.5 127.7 48.1 132.9 52C137.9 55.5 139.3 63.4 135.3 69.3C131.4 74.9 122.7 77.7 117.6 83.1C112.8 88.5 110.4 94.9 110.2 104Z" fill="#0b37a6"/><path d="M110.2 104C110.4 94.8 112.8 88.4 117.6 83.1C122.7 77.7 131.5 74.9 135.4 69.3C139.4 63.3 138 55.4 133 51.8C127.8 47.9 121.8 47.3 116.3 48.9C110.3 50.5 106.4 50.3 102.8 49.6C101.3 49.6 99.9 49.2 98.5 48.6L98.9 49.4C100.2 50.1 101.5 50.6 103 50.8C106.3 51.8 110 52.4 115.6 50.7C120.9 49 126.7 49.3 131.9 53C136.9 56.3 138.4 63.9 134.6 69.7C130.8 75.2 122.5 78 117.5 83.4C112.8 88.7 110.5 95 110.3 104Z" fill="#3d9afa"/><path d="M110.3 104C110.5 95 112.8 88.7 117.5 83.3C122.5 78 130.9 75.2 134.7 69.7C138.5 63.8 137 56.1 132 52.8C126.9 49.1 121 48.8 115.7 50.5C110 52.1 106.3 51.6 103 50.6C101.5 50.5 100.2 50 98.8 49.3L99.6 50.9C100.8 51.7 102 52.4 103.3 52.8C106.2 54.5 109.3 55.5 114.4 53.7C119.3 52 124.8 51.8 129.9 54.9C134.9 57.8 136.6 64.9 133.1 70.5C129.5 75.8 122 78.7 117.3 83.9C112.9 89.1 110.7 95.3 110.6 104Z" fill="#1e6fe6"/><path d="M110.5 104C110.7 95.3 112.9 89.1 117.3 83.9C122 78.6 129.6 75.7 133.2 70.4C136.8 64.8 135.1 57.7 130.1 54.8C125 51.7 119.4 51.7 114.5 53.5C109.4 55.3 106.2 54.3 103.3 52.7C102 52.2 100.7 51.6 99.5 50.8L100.3 52.4C101.4 53.3 102.5 54.2 103.7 54.9C106.1 57.2 108.7 58.7 113.2 56.8C117.7 54.9 123 54.4 128 56.9C133 59.4 134.8 65.9 131.6 71.2C128.3 76.4 121.5 79.3 117.2 84.4C112.9 89.6 110.8 95.7 110.8 104Z" fill="#0b37a6"/><path d="M110.8 104C110.8 95.6 112.9 89.5 117.2 84.4C121.5 79.3 128.4 76.3 131.7 71.2C135 65.9 133.2 59.3 128.2 56.8C123.1 54.2 117.8 54.7 113.3 56.6C108.7 58.5 106.1 57 103.6 54.7C102.5 54 101.3 53.2 100.2 52.3L101 54C104 62 108 72 108 82C108 92 109 98 111 104Z" fill="#1a62dc"/><path d="M98 19C108 10 120 3 134 3C146 3 156 10 162 22C154 13 144 9 132 10C120 11 108 17 100 25C96 24 96 22 98 19Z" fill="#3692f7" fill-opacity=".85"/><path d="M139 104C137 92 142 80 150 70C154 65 160 62 168 61C180 61 190 70 193 82C195 90 193 98 190 104L188.7 104C191.5 98.3 193.4 90.7 191.6 83C188.9 71.7 179.6 63 168.2 62.8C160.5 63.7 154.6 66.5 150.7 71.3C143 80.9 138.2 92.4 140.1 104Z" fill="#2f86f2"/><path d="M140.1 104C138.2 92.4 142.9 80.8 150.7 71.2C154.6 66.4 160.5 63.6 168.2 62.8C179.6 62.9 188.9 71.6 191.7 83C193.5 90.7 191.6 98.3 188.8 104L186.7 104C189.2 98.9 191 91.8 189.5 84.6C187.1 74.2 178.9 66.1 168.4 65.6C161.3 66.2 155.5 68.8 151.8 73.3C144.4 82.2 140.1 93.1 141.9 104Z" fill="#1a5fd8"/><path d="M141.8 104C140 93.1 144.4 82.2 151.7 73.2C155.5 68.7 161.3 66.1 168.4 65.5C178.9 66 187.2 74.1 189.5 84.6C191.1 91.7 189.3 98.9 186.8 104L184.9 104C187.3 99.3 188.9 92.7 187.6 86C185.6 76.4 178.3 68.8 168.7 68.1C162 68.4 156.4 70.7 152.7 75.1C145.7 83.4 141.7 93.7 143.4 104Z" fill="#0a2f98"/><path d="M143.3 104C141.7 93.7 145.7 83.3 152.7 75C156.3 70.7 162 68.3 168.7 68C178.3 68.7 185.7 76.3 187.7 86C189 92.7 187.3 99.3 185 104L183.7 104C185.8 99.7 187.4 93.4 186.3 87C184.5 78 177.9 70.7 168.8 69.8C162.5 70 156.9 72.2 153.4 76.3C146.6 84.2 142.9 94.1 144.5 104Z" fill="#2f86f2"/><path d="M144.4 104C142.8 94.1 146.6 84.2 153.3 76.2C156.9 72.1 162.5 69.9 168.8 69.8C177.9 70.6 184.6 77.9 186.3 87C187.5 93.3 185.9 99.7 183.8 104L181.7 104C183.6 100.2 185 94.4 184.1 88.6C182.8 80.5 177.2 73.7 169.1 72.6C163.3 72.5 157.9 74.4 154.4 78.3C148.1 85.5 144.8 94.8 146.2 104Z" fill="#1a5fd8"/><path d="M146.2 104C144.7 94.8 148.1 85.5 154.4 78.2C157.9 74.3 163.3 72.5 169.1 72.5C177.2 73.7 182.8 80.5 184.2 88.6C185.1 94.4 183.7 100.2 181.8 104L179.9 104C181.6 100.7 182.9 95.4 182.3 90C181.3 82.7 176.6 76.4 169.3 75.1C164 74.7 158.7 76.4 155.4 80.1C149.4 86.7 146.4 95.4 147.7 104Z" fill="#0a2f98"/><path d="M147.7 104C146.3 95.3 149.3 86.7 155.3 80C158.7 76.3 164 74.7 169.3 75C176.7 76.3 181.3 82.7 182.3 90C183 95.3 181.7 100.7 180 104L178.7 104C180.2 101 181.4 96 180.9 91C180.2 84.3 176.2 78.3 169.5 76.8C164.5 76.3 159.3 77.8 156 81.3C150.3 87.5 147.6 95.8 148.8 104Z" fill="#2f86f2"/><path d="M148.8 104C147.5 95.8 150.2 87.5 156 81.2C159.2 77.8 164.5 76.2 169.5 76.8C176.2 78.2 180.2 84.2 181 91C181.5 96 180.2 101 178.8 104L176.7 104C177.9 101.5 179 97.1 178.8 92.6C178.5 86.9 175.6 81.4 169.8 79.6C165.3 78.9 160.2 80.1 157.1 83.3C151.8 88.9 149.4 96.4 150.5 104Z" fill="#1a5fd8"/><path d="M150.5 104C149.4 96.4 151.7 88.8 157.1 83.2C160.2 80 165.3 78.8 169.8 79.6C175.6 81.3 178.5 86.8 178.9 92.6C179.1 97.1 178 101.5 176.8 104L174.9 104C175.9 102 176.9 98 176.9 94C176.9 89.1 175 84.1 170 82.1C166 81.1 161 82.1 158 85.1C153 90 151.1 97 152.1 104Z" fill="#0a2f98"/><path d="M152 104C151 97 153 90 158 85C161 82 166 81 170 82C175 84 177 89 177 94C177 98 176 102 175 104Z" fill="#0c3aa8"/><path d="M156 104C158 98 163 94 170 94C174 94 177 96 178 100L178 104Z" fill="#2a7cee" fill-opacity=".85"/><path d="M120 75C130 68 150 66 158 58C152 68 142 76 138 86C136 92 137 98 139 104H122C121 94 122 84 126 79Z" fill="#0a2c90" fill-opacity=".75"/><path d="M113 104C113 94 116 86 122 80C119 88 119 96 121 104Z" fill="#3f9dfb"/></g></g></symbol></defs><svg x="115" y="477.2" width="206" height="102.8"><use href="#bloom" width="206" height="103"/></svg><svg x="345" y="477.2" width="206" height="102.8"><use href="#bloom" width="206" height="103"/><g transform="translate(-345 -477.2)"><rect x="356.8" y="482.4" width="150.4" height="100" fill="#3a6a9e" fill-opacity=".16"/><rect x="358" y="483.4" width="148" height="100" fill="#3a6a9e" fill-opacity=".16"/><rect x="359.2" y="484.4" width="145.6" height="100" fill="#fdfdfe"/><rect x="359.2" y="484.4" width="145.6" height="4" fill="#dde5f1"/><rect x="361" y="485" width="32" height="3.4" rx=".8" fill="#fdfdfe"/><path d="M363 486.8H388" stroke="#959aa3" stroke-width=".8" stroke-dasharray="5 1.4 9 1.2"/><rect x="359.2" y="488.4" width="145.6" height="5.4" fill="#f7f9fc"/><rect x="368" y="489.4" width="108" height="3.4" rx="1.7" fill="#eef1f6"/><path d="M361.6 491.2H366M371 491.2H384" stroke="#8a8f98" stroke-width=".8" stroke-dasharray="1.2 1"/><path d="M478 491.2H502" stroke="#6a6f78" stroke-width="1.3" stroke-dasharray="1.5 2"/><path d="M361 496.6H500" stroke="#9aa0aa" stroke-width="1" stroke-dasharray="6 2.4 4 2 8 2.6"/><path d="M362 496.6H500" stroke="#e3b23a" stroke-width="1" stroke-dasharray="1 12.4"/><path d="M361 503.4H392" stroke="#8a9099" stroke-width=".9" stroke-dasharray="7 2.6"/><path d="M424 503.4H500" stroke="#7a8089" stroke-width=".9" stroke-dasharray="9 3.4 7 3"/><path d="M361.6 510H379" stroke="#2f8ad6" stroke-width="2.2"/><path d="M383 509H410M383 511H404" stroke="#a8adb5" stroke-width=".7"/><path d="M409 515H500" stroke="#6a6f78" stroke-width="1" stroke-dasharray="8 4.6 10 4 9 5"/><rect x="359.2" y="519" width="145.6" height="1" fill="#eef0f4"/><rect x="361" y="522.4" width="87" height="20.8" fill="#e2452d"/><path d="M420 543.2L432 533L448 536V543.2Z" fill="#3b8d9c"/><path d="M361 541Q370 538.6 380 541T400 541T420 541V543.2H361Z" fill="#f4f4f4"/><path d="M385 527.4H428" stroke="#f6d8b0" stroke-width="1.6" stroke-dasharray="12 1 9 1"/><circle cx="382" cy="534" r="2.2" fill="#f7c948"/><rect x="380.4" y="536" width="3.4" height="4.4" fill="#2f6fb8"/><circle cx="391" cy="533" r="2" fill="#f4d9c0"/><rect x="389.4" y="535" width="3.6" height="5" fill="#2a9a8a"/><path d="M398 538L406 531L404 538Z" fill="#fff"/><path d="M408 536L414 533" stroke="#f7c948" stroke-width="1.2"/><path d="M361 546.6H369" stroke="#565b63" stroke-width="1.4"/><rect x="363.8" y="551.2" width="25.8" height="17.2" fill="#4a5650"/><path d="M363.8 560L370 554L376 559L382 553L389.6 558V568.4H363.8Z" fill="#2d3632"/><path d="M366 556L372 552.6M378 555L386 552.4" stroke="#c9d0cc" stroke-width="1.2"/><path d="M392 553.4H428" stroke="#4d525a" stroke-width="1.3" stroke-dasharray="10 1 14 1"/><path d="M392 557.4H428M392 561H424" stroke="#8e949c" stroke-width=".9" stroke-dasharray="6 1.6 9 1.4"/><path d="M392 566H420" stroke="#a9aeb6" stroke-width=".8" stroke-dasharray="4 2"/><circle cx="393.2" cy="566" r="1.2" fill="#d9534f"/><rect x="363.8" y="577.4" width="25.8" height="6" fill="#1f6fd0"/><path d="M392 578.8H440" stroke="#4d525a" stroke-width="1.3" stroke-dasharray="12 1 14 1"/><rect x="452.2" y="570" width="16.2" height="3.4" fill="#1a86d8"/><path d="M490 563H502M490 566H500" stroke="#9aa0a8" stroke-width=".8"/><rect x="452" y="577.6" width="12" height="3" fill="#e3a52a"/><rect x="456" y="577.6" width="4" height="3" fill="#d8453a"/><rect x="460" y="577.6" width="4" height="3" fill="#38a852"/><path d="M468 578.6H500" stroke="#7c828a" stroke-width=".9" stroke-dasharray="8 2"/><rect x="427.6" y="522.6" width="61.4" height="46.2" fill="#9aa0a8" fill-opacity=".35"/><rect x="428" y="523" width="60.6" height="45.4" fill="#fff"/><rect x="428" y="523" width="60.6" height="18" fill="url(#qq)"/><path d="M430 525.6L431.4 524L432.8 525.6V527.4H430Z" fill="#fff"/><path d="M478 525H486" stroke="#fff" stroke-width=".7" stroke-dasharray="1.2 1.6"/><circle cx="458.3" cy="539.8" r="4.6" fill="#fff"/><circle cx="458.3" cy="539.8" r="3.8" fill="#2a2326"/><path d="M455.6 542.6Q458.3 544.6 461 542.6L460.4 540H456.2Z" fill="#d8372c"/><circle cx="458.3" cy="538.6" r="1.7" fill="#f1e8e2"/><path d="M444 549H456" stroke="#4a4e55" stroke-width="1"/><path d="M442 555.4H475" stroke="#5fb7ea" stroke-width=".8"/><circle cx="443" cy="554" r=".8" fill="#3aa0e6"/><path d="M445 554H452" stroke="#8a9098" stroke-width=".7"/><path d="M444 558.6H452M458 558.6H465M470 558.6H476" stroke="#a0a6ae" stroke-width=".7"/><rect x="441.8" y="561.8" width="33.6" height="4.6" rx=".8" fill="#1fb0f1"/><path d="M431 567H436M482 567H486" stroke="#9aa0a8" stroke-width=".7"/></g></svg><svg x="575" y="477.4" width="206.2" height="102.6"><use href="#bloom" width="206" height="103"/><g transform="translate(-575 -477.4)"><rect x="583" y="479.6" width="200" height="101" fill="#2f5f96" fill-opacity=".28"/><rect x="584.4" y="481" width="198" height="100" fill="#2f5f96" fill-opacity=".25"/><rect x="585.6" y="482.4" width="196" height="98" fill="#222227"/><rect x="585.6" y="482.4" width="196" height="3.4" fill="#f4f4f6"/><path d="M587 484.1H620" stroke="#55585e" stroke-width=".7" stroke-dasharray="8 1"/><path d="M772 484.1H780" stroke="#55585e" stroke-width=".6" stroke-dasharray="1.2 2"/><rect x="585.6" y="485.8" width="196" height="9.2" fill="#1a1a1d"/><path d="M587 486.8H680" stroke="#56565c" stroke-width=".8" stroke-dasharray="5 1.6 3 1.4 4 1.8"/><path d="M588 491H640" stroke="#5e5e64" stroke-width="1" stroke-dasharray="4 3 7 4 5 3"/><path d="M676 491H694" stroke="#b4b4b8" stroke-width="1"/><path d="M748 491H780" stroke="#525258" stroke-width="1" stroke-dasharray="7 3"/><rect x="585.6" y="493.4" width="196" height="3.6" fill="#26262b"/><path d="M587 495.2H600M626 495.2H644M676 495.2H690M748 495.2H778" stroke="#505056" stroke-width=".9" stroke-dasharray="2 1.4"/><rect x="631" y="494.4" width="2.4" height="1.6" fill="#c2c2c6"/><rect x="678" y="494.4" width="2.4" height="1.6" fill="#c2c2c6"/><rect x="764" y="494.4" width="2.4" height="1.6" fill="#c2c2c6"/><rect x="585.6" y="497" width="86.6" height="3.8" fill="#1f1f23"/><path d="M587 499H592" stroke="#8c8c90" stroke-width=".7"/><rect x="585.6" y="500.8" width="86.6" height="31.4" fill="#2a2a30"/><path d="M611 513.2H645" stroke="#45454b" stroke-width="2.4" stroke-dasharray="4 .5"/><path d="M614 524H643" stroke="#3e3e44" stroke-width="1.2" stroke-dasharray="2.4 .5"/><rect x="672.6" y="497" width="109" height="35.2" fill="#19191b"/><rect x="585.6" y="532.4" width="196" height="6" fill="#26262b"/><path d="M588 535.4H600M611 535.4H660" stroke="#48484e" stroke-width="1" stroke-dasharray="2.4 3.2"/><path d="M675 535.4H690M698 535.4H740M752 535.4H762" stroke="#707076" stroke-width="1.2" stroke-dasharray="2.2 2.6"/><path d="M768 535.4H780" stroke="#bcbcc0" stroke-width="1"/><rect x="585.6" y="538.6" width="196" height="42" fill="#202025"/><rect x="585.6" y="538.6" width="18" height="9" fill="#26262b"/><rect x="585.6" y="547.6" width="18" height="33" fill="#28282e"/><path d="M587.4 541H591M594 541H598M587.4 545H591M594 545H598" stroke="#707076" stroke-width=".9"/><path d="M587 549.6H601" stroke="#5e5e64" stroke-width="1" stroke-dasharray="1.6 2"/><path d="M605.2 539V547.4" stroke="#a4a4a8" stroke-width=".7"/><rect x="604.4" y="538.8" width="1.8" height="1.6" fill="#b4b4b8"/><path d="M697.6 549V580.4" stroke="#a4a4a8" stroke-width=".7"/><rect x="696.6" y="548" width="2" height="1.8" fill="#b4b4b8"/><path d="M606 540.4H780" stroke="#3a3a40" stroke-width=".6" stroke-dasharray="9 24"/><path d="M652 548.6V580M742.6 548.6V580" stroke="#2c2c32" stroke-width=".6"/><path d="M655 550.4H665M701 550.4H711M746 550.4H756" stroke="#3c3c42" stroke-width=".8"/></g></svg><rect x="665" y="583.2" width="26.4" height="3.4" rx="1.7" fill="#0b5fc2"/><g opacity=".22"><path d="M698.6 464.6H742" stroke="#5a6a80" stroke-width="3" stroke-linecap="round"/><path d="M741 460.6L750 464.6L741 468.6Z" fill="#5a6a80"/></g><path d="M698.6 463.1H742" stroke="url(#arr)" stroke-width="2.2" stroke-linecap="round"/><path d="M740.6 459.2L749.4 463.1L740.6 467Z" fill="#2b98df"/><rect x="761.4" y="454" width="20" height="19.7" rx="3.6" fill="#ec3a4f"/><path d="M766.4 459L776 468.6M776 459L766.4 468.6" stroke="#fff" stroke-width="1.3" stroke-linecap="round"/><path d="M901.8 528H912.8M907.3 522.5V533.5" stroke="#1f1f23" stroke-width="1"/><path d="M773.4 469.8V483.2L776.4 480.4L778.6 485.2L780.6 484.3L778.4 479.6H782.6Z" fill="#fff" stroke="#111" stroke-width=".9" stroke-linejoin="round"/></svg>
</div></body></html>
